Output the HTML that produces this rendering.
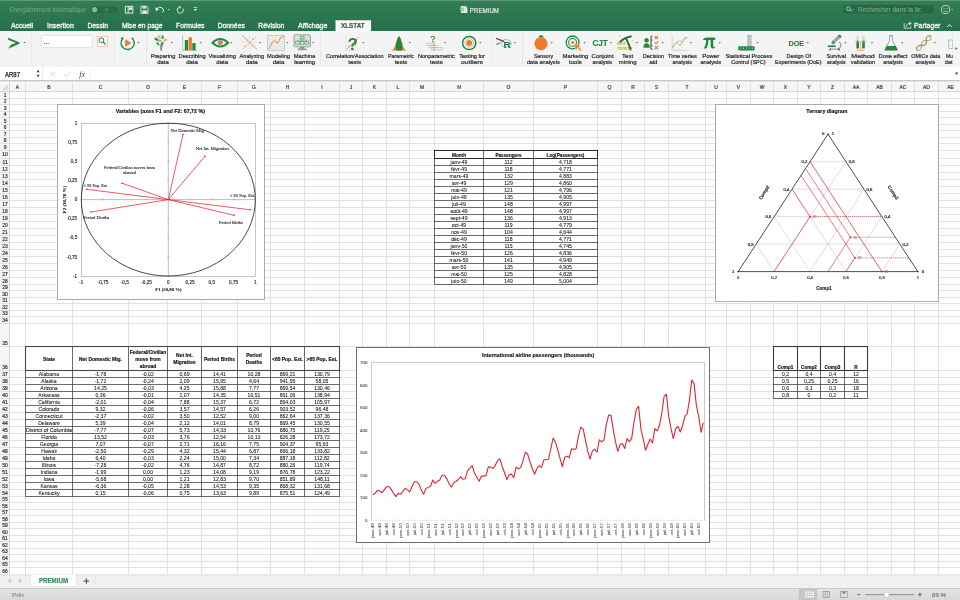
<!DOCTYPE html>
<html><head><meta charset="utf-8"><style>
*{box-sizing:border-box}
html,body{margin:0;padding:0}
body{width:960px;height:600px;overflow:hidden;position:relative;background:#fff;font-family:"Liberation Sans", sans-serif;}
.a{position:absolute}
.t{position:absolute;white-space:nowrap;line-height:1}
</style></head><body>
<svg class="a" style="left:0;top:0;will-change:transform" width="960" height="600" viewBox="0 0 960 600"><defs><linearGradient id="tg" x1="0" y1="0" x2="0" y2="1"><stop offset="0" stop-color="#327e55"/><stop offset="1" stop-color="#25704a"/></linearGradient></defs><rect x="0" y="0" width="960" height="31.1" fill="url(#tg)"/><rect x="0" y="0" width="960" height="1" fill="#5e9a78"/><text x="9.5" y="11.98" font-size="6.6" font-family='"Liberation Sans", sans-serif' fill="#6d9f82" stroke="#6d9f82" stroke-width="0.14" textLength="76" lengthAdjust="spacingAndGlyphs">Enregistrement automatique</text><rect x="91" y="5.9" width="27" height="7.5" rx="3.75" fill="#296c48"/><circle cx="94.6" cy="9.6" r="2.6" fill="#8fb49d"/><circle cx="106.5" cy="9.6" r="1.1" fill="none" stroke="#7fa68e" stroke-width="0.6"/><rect x="125.3" y="6.3" width="7.6" height="6.8" fill="none" stroke="#e8f0eb" stroke-width="0.9"/><line x1="128.2" y1="6.3" x2="128.2" y2="13.1" stroke="#e8f0eb" stroke-width="0.9"/><rect x="129" y="7.4" width="3" height="2.5" fill="#e8f0eb"/><path d="M140.9 6.2h5.8l1.3 1.3v5.8h-7.1z" fill="none" stroke="#e8f0eb" stroke-width="0.9"/><rect x="142.6" y="6.4" width="3.6" height="2.2" fill="#e8f0eb"/><rect x="142.4" y="10.4" width="4.4" height="2.6" fill="#e8f0eb"/><path d="M162.8 12.4 A3.4 3.2 0 0 0 157.2 8.6" fill="none" stroke="#e8f0eb" stroke-width="1"/><path d="M155.4 7 l0.4 4 l3.2 -1.6z" fill="#e8f0eb"/><path d="M167.7 9 h2.2 l-1.1 1.3z" fill="#e8f0eb"/><path d="M179.7 7.3 A3 3 0 1 0 182.8 8.6" fill="none" stroke="#e8f0eb" stroke-width="0.9"/><path d="M178.6 6.3 l2.6 0.4 l-1.6 2z" fill="#e8f0eb"/><rect x="193.6" y="7" width="3.6" height="0.7" fill="#e8f0eb"/><path d="M193.6 9 h3.6 l-1.8 2z" fill="#e8f0eb"/><path d="M460.9 5.9 h4.6 l1.9 1.9 v5.1 h-6.5z" fill="#dfeae3"/><rect x="460.2" y="7.6" width="3.6" height="3.8" fill="#9bbfa9"/><text x="469.8" y="12.52" font-size="7" font-family='"Liberation Sans", sans-serif' fill="#dfeae3" stroke="#dfeae3" stroke-width="0.2" textLength="29.2" lengthAdjust="spacingAndGlyphs">PREMIUM</text><rect x="843.5" y="5.1" width="89.8" height="8.4" rx="1" fill="#246744"/><circle cx="848.4" cy="8.6" r="1.9" fill="none" stroke="#d7e5dc" stroke-width="0.8"/><line x1="849.8" y1="10" x2="851.3" y2="11.6" stroke="#d7e5dc" stroke-width="0.9"/><rect x="852.3" y="9" width="1.6" height="0.6" fill="#d7e5dc"/><text x="857.8" y="11.98" font-size="6.6" font-family='"Liberation Sans", sans-serif' fill="#7fa78f" stroke="#7fa78f" stroke-width="0.14" textLength="64.2" lengthAdjust="spacingAndGlyphs">Rechercher dans la fe:</text><circle cx="945.6" cy="9.5" r="4.1" fill="none" stroke="#dfeae3" stroke-width="0.8"/><circle cx="944.1" cy="8.6" r="0.5" fill="#dfeae3"/><circle cx="947.1" cy="8.6" r="0.5" fill="#dfeae3"/><path d="M943.6 10.7 Q945.6 12.4 947.6 10.7" fill="none" stroke="#dfeae3" stroke-width="0.7"/><path d="M951.2 9.2h1.8l-0.9 1.1z" fill="#dfeae3"/><text x="11" y="28.02" font-size="7" font-family='"Liberation Sans", sans-serif' fill="#f4f8f5" stroke="#f4f8f5" stroke-width="0.3" textLength="22" lengthAdjust="spacingAndGlyphs">Accueil</text><text x="47" y="28.02" font-size="7" font-family='"Liberation Sans", sans-serif' fill="#f4f8f5" stroke="#f4f8f5" stroke-width="0.3">Insertion</text><text x="87.5" y="28.02" font-size="7" font-family='"Liberation Sans", sans-serif' fill="#f4f8f5" stroke="#f4f8f5" stroke-width="0.3" textLength="20.5" lengthAdjust="spacingAndGlyphs">Dessin</text><text x="122" y="28.02" font-size="7" font-family='"Liberation Sans", sans-serif' fill="#f4f8f5" stroke="#f4f8f5" stroke-width="0.3" textLength="40.5" lengthAdjust="spacingAndGlyphs">Mise en page</text><text x="176" y="28.02" font-size="7" font-family='"Liberation Sans", sans-serif' fill="#f4f8f5" stroke="#f4f8f5" stroke-width="0.3" textLength="28.5" lengthAdjust="spacingAndGlyphs">Formules</text><text x="217.7" y="28.02" font-size="7" font-family='"Liberation Sans", sans-serif' fill="#f4f8f5" stroke="#f4f8f5" stroke-width="0.3" textLength="27.1" lengthAdjust="spacingAndGlyphs">Données</text><text x="258.3" y="28.02" font-size="7" font-family='"Liberation Sans", sans-serif' fill="#f4f8f5" stroke="#f4f8f5" stroke-width="0.3" textLength="26.1" lengthAdjust="spacingAndGlyphs">Révision</text><text x="298" y="28.02" font-size="7" font-family='"Liberation Sans", sans-serif' fill="#f4f8f5" stroke="#f4f8f5" stroke-width="0.3" textLength="29.5" lengthAdjust="spacingAndGlyphs">Affichage</text><path d="M335.5 31.4 V20.2 H371.1 V31.4z" fill="#f8f8f8"/><text x="341" y="27.85" font-size="6.8" font-family='"Liberation Sans", sans-serif' fill="#3a5c49" stroke="#3a5c49" stroke-width="0.2" font-weight="bold" textLength="23.6" lengthAdjust="spacingAndGlyphs">XLSTAT</text><path d="M904.2 23 v5.2 h6.6 v-2.2" fill="none" stroke="#dfeae3" stroke-width="0.8"/><path d="M905.8 27 Q906.5 23.3 909.8 23.3" fill="none" stroke="#dfeae3" stroke-width="0.8"/><path d="M909.2 21.6 l2.6 1.8 l-2.6 1.8z" fill="#dfeae3"/><text x="914" y="28.12" font-size="7" font-family='"Liberation Sans", sans-serif' fill="#eef4f0" stroke="#eef4f0" stroke-width="0.3" textLength="26.4" lengthAdjust="spacingAndGlyphs">Partager</text><path d="M947.2 27 L949.4 24.6 L951.6 27" fill="none" stroke="#eef4f0" stroke-width="1"/><rect x="0" y="31.1" width="960" height="35.3" fill="#f4f4f4"/><rect x="0" y="31.1" width="960" height="1.1" fill="#fbfbfb"/><line x1="31.3" y1="33" x2="31.3" y2="64.5" stroke="#dedede" stroke-width="0.6"/><line x1="114" y1="33" x2="114" y2="64.5" stroke="#dedede" stroke-width="0.6"/><line x1="146.6" y1="33" x2="146.6" y2="64.5" stroke="#dedede" stroke-width="0.6"/><line x1="320.6" y1="33" x2="320.6" y2="64.5" stroke="#dedede" stroke-width="0.6"/><line x1="491.6" y1="33" x2="491.6" y2="64.5" stroke="#dedede" stroke-width="0.6"/><line x1="522.8" y1="33" x2="522.8" y2="64.5" stroke="#dedede" stroke-width="0.6"/><line x1="952.8" y1="31.3" x2="952.8" y2="66.4" stroke="#dcdcdc" stroke-width="0.6"/><line x1="0" y1="66.2" x2="960" y2="66.2" stroke="#d9d9d9" stroke-width="0.6"/><path d="M7.6 37.6 L19.6 42.4 L19.8 43.6 L8.4 48.8 L11.2 44.6 L16 43.1 L8.5 40z" fill="#1e8a3a"/><path d="M23.4 42 h2.2 l-1.1 1.3z" fill="#444"/><rect x="41.4" y="35.4" width="51" height="12" rx="1.2" fill="#fff" stroke="#cfcfcf" stroke-width="0.6"/><circle cx="44.6" cy="43.6" r="0.5" fill="#333"/><circle cx="46.4" cy="43.6" r="0.5" fill="#333"/><circle cx="48.2" cy="43.6" r="0.5" fill="#333"/><rect x="97.2" y="36.4" width="10.2" height="9.9" fill="#fbfbfb" stroke="#f0a07a" stroke-width="0.5"/><circle cx="101.4" cy="40.3" r="2.4" fill="none" stroke="#1e8a3a" stroke-width="1"/><line x1="103.1" y1="42" x2="105.6" y2="44.6" stroke="#1e8a3a" stroke-width="1.2"/><path d="M131.8 37.8 A6.6 6.6 0 1 1 122.2 39.2" fill="none" stroke="#1e8a3a" stroke-width="1.4"/><path d="M120.6 37.4 l3.4 0.2 l-1.8 2.8z" fill="#1e8a3a"/><path d="M125.2 39.2 L131.6 43 L125.2 46.8z" fill="#ee7b2c"/><path d="M137.4 42 h2.2 l-1.1 1.3z" fill="#444"/><g><rect x="157.4" y="35.6" width="3.2" height="2" fill="#f0a27a" transform="rotate(-30 159 36.6)"/><rect x="161.6" y="35.4" width="2" height="3.6" fill="#3c9a52"/><rect x="154.6" y="38.2" width="3.6" height="2.2" fill="#2f8a45" transform="rotate(35 156.4 39.3)"/><rect x="163.6" y="39" width="3.4" height="2.2" fill="#f0a27a" transform="rotate(-35 165.3 40.1)"/><rect x="158.2" y="39.6" width="3" height="2" fill="#6cc07e" transform="rotate(20 159.7 40.6)"/><rect x="156.8" y="42.2" width="2" height="3" fill="#3c9a52" transform="rotate(-25 157.8 43.7)"/><rect x="161" y="42" width="2.2" height="3.4" fill="#2f8a45" transform="rotate(25 162.1 43.7)"/><rect x="159.4" y="37.6" width="1.6" height="1.6" fill="#f4b58e"/><rect x="160.2" y="45.6" width="2" height="5" fill="#8c8c8c"/><path d="M158.8 44.6 h4.8 l-1.4 1.6 h-2z" fill="#7f9f86"/></g><path d="M170.6 42.2 h2.2 l-1.1 1.3z" fill="#444"/><text x="150.7" y="57.86" font-size="6" font-family='"Liberation Sans", sans-serif' fill="#2b2b2b" stroke="#2b2b2b" stroke-width="0.22" textLength="24.6" lengthAdjust="spacingAndGlyphs">Preparing</text><text x="163" y="63.86" font-size="6" font-family='"Liberation Sans", sans-serif' fill="#2b2b2b" stroke="#2b2b2b" stroke-width="0.22" text-anchor="middle">data</text><path d="M182.6 35 V50.4 H197" fill="none" stroke="#8f8f8f" stroke-width="0.5"/><rect x="184.8" y="40" width="3.3" height="10.3" fill="#1e8a3a"/><rect x="188.6" y="37.2" width="3.3" height="13.1" fill="#ee7b2c"/><rect x="192.3" y="43" width="3.3" height="7.3" fill="#1e8a3a"/><path d="M199.7 42.2 h2.2 l-1.1 1.3z" fill="#444"/><text x="178.5" y="57.86" font-size="6" font-family='"Liberation Sans", sans-serif' fill="#2b2b2b" stroke="#2b2b2b" stroke-width="0.22" textLength="27.2" lengthAdjust="spacingAndGlyphs">Describing</text><text x="192" y="63.86" font-size="6" font-family='"Liberation Sans", sans-serif' fill="#2b2b2b" stroke="#2b2b2b" stroke-width="0.22" text-anchor="middle">data</text><path d="M212.4 42.8 Q220.3 35.2 228.2 42.8 Q220.3 50.4 212.4 42.8z" fill="#fff" stroke="#1e8a3a" stroke-width="1.9"/><circle cx="220.3" cy="42.8" r="2.8" fill="#a8a8a8"/><circle cx="220.3" cy="42.8" r="1.9" fill="#ee7b2c"/><path d="M230.1 42.2 h2.2 l-1.1 1.3z" fill="#444"/><text x="208.5" y="57.86" font-size="6" font-family='"Liberation Sans", sans-serif' fill="#2b2b2b" stroke="#2b2b2b" stroke-width="0.22" textLength="27.5" lengthAdjust="spacingAndGlyphs">Visualizing</text><text x="222.2" y="63.86" font-size="6" font-family='"Liberation Sans", sans-serif' fill="#2b2b2b" stroke="#2b2b2b" stroke-width="0.22" text-anchor="middle">data</text><g stroke-width="0.6"><line x1="249.6" y1="34.8" x2="249.6" y2="49.8" stroke="#b9c9bd" stroke-dasharray="1 0.8"/><line x1="242" y1="42.4" x2="257.5" y2="42.4" stroke="#d9b9a9" stroke-dasharray="1 0.8"/><line x1="242.5" y1="35.5" x2="257" y2="49.5" stroke="#ee7b2c" stroke-width="1" opacity="0.8"/><line x1="243" y1="49" x2="256.5" y2="36" stroke="#e8a47a" stroke-width="0.8" opacity="0.8"/><circle cx="245" cy="46" r="0.5" fill="#1e8a3a"/><circle cx="253" cy="39" r="0.5" fill="#1e8a3a"/><circle cx="247" cy="40" r="0.5" fill="#7cc08a"/><circle cx="252" cy="46.5" r="0.5" fill="#7cc08a"/></g><path d="M259 42.2 h2.2 l-1.1 1.3z" fill="#444"/><text x="239.4" y="57.86" font-size="6" font-family='"Liberation Sans", sans-serif' fill="#2b2b2b" stroke="#2b2b2b" stroke-width="0.22" textLength="24.8" lengthAdjust="spacingAndGlyphs">Analyzing</text><text x="251.8" y="63.86" font-size="6" font-family='"Liberation Sans", sans-serif' fill="#2b2b2b" stroke="#2b2b2b" stroke-width="0.22" text-anchor="middle">data</text><g stroke="#c9d9cc" stroke-width="0.35"><line x1="267.8" y1="35.3" x2="267.8" y2="50.3"/><line x1="270.2" y1="35.3" x2="270.2" y2="50.3"/><line x1="272.6" y1="35.3" x2="272.6" y2="50.3"/><line x1="275" y1="35.3" x2="275" y2="50.3"/><line x1="277.4" y1="35.3" x2="277.4" y2="50.3"/><line x1="279.8" y1="35.3" x2="279.8" y2="50.3"/><line x1="282.2" y1="35.3" x2="282.2" y2="50.3"/><line x1="284.6" y1="35.3" x2="284.6" y2="50.3"/><line x1="267.8" y1="35.3" x2="284.7" y2="35.3"/><line x1="267.8" y1="37.44" x2="284.7" y2="37.44"/><line x1="267.8" y1="39.58" x2="284.7" y2="39.58"/><line x1="267.8" y1="41.72" x2="284.7" y2="41.72"/><line x1="267.8" y1="43.86" x2="284.7" y2="43.86"/><line x1="267.8" y1="46" x2="284.7" y2="46"/><line x1="267.8" y1="48.14" x2="284.7" y2="48.14"/><line x1="267.8" y1="50.28" x2="284.7" y2="50.28"/></g><rect x="267.8" y="35.3" width="16.9" height="15" fill="none" stroke="#9fb7a4" stroke-width="0.5"/><path d="M269 49 L272.5 42 L275 40.5 L277.2 43.5 L280.5 38 L283.5 36.6" fill="none" stroke="#ee7b2c" stroke-width="0.9"/><path d="M286.2 42.2 h2.2 l-1.1 1.3z" fill="#444"/><text x="267" y="57.86" font-size="6" font-family='"Liberation Sans", sans-serif' fill="#2b2b2b" stroke="#2b2b2b" stroke-width="0.22" textLength="23" lengthAdjust="spacingAndGlyphs">Modeling</text><text x="278.5" y="63.86" font-size="6" font-family='"Liberation Sans", sans-serif' fill="#2b2b2b" stroke="#2b2b2b" stroke-width="0.22" text-anchor="middle">data</text><rect x="294" y="34.8" width="16.4" height="12" rx="0.8" fill="#dedede" stroke="#8a8a8a" stroke-width="0.8"/><rect x="300" y="47" width="4.4" height="1.8" fill="#8a8a8a"/><rect x="297.6" y="48.6" width="9.2" height="1.6" rx="0.5" fill="#9a9a9a"/><g fill="#cfe8d2" stroke="#1e8a3a" stroke-width="0.5"><rect x="300.4" y="36.6" width="3.6" height="2.3"/><rect x="295.8" y="41.6" width="3.6" height="2.6"/><rect x="300.4" y="41.6" width="3.6" height="2.6"/><rect x="305" y="41.6" width="3.6" height="2.6"/></g><path d="M302.2 38.9 V41.6 M297.6 41.6 V40.2 H306.8 V41.6" fill="none" stroke="#1e8a3a" stroke-width="0.4"/><path d="M312.2 42.2 h2.2 l-1.1 1.3z" fill="#444"/><text x="293.8" y="57.86" font-size="6" font-family='"Liberation Sans", sans-serif' fill="#2b2b2b" stroke="#2b2b2b" stroke-width="0.22" textLength="21.6" lengthAdjust="spacingAndGlyphs">Machine</text><text x="294.2" y="63.86" font-size="6" font-family='"Liberation Sans", sans-serif' fill="#2b2b2b" stroke="#2b2b2b" stroke-width="0.22" textLength="20.8" lengthAdjust="spacingAndGlyphs">learning</text><path d="M345.8 36 V50.4 H359.2" fill="none" stroke="#c8c8c8" stroke-width="0.5"/><line x1="346.5" y1="49.5" x2="358.5" y2="37.5" stroke="#ee7b2c" stroke-width="0.8"/><text x="347.6" y="49.6" font-size="17" font-family='"Liberation Sans", sans-serif' fill="#1e8a3a" font-weight="bold">?</text><circle cx="349" cy="46" r="0.5" fill="#1e8a3a"/><circle cx="355.5" cy="45" r="0.5" fill="#1e8a3a"/><circle cx="356.5" cy="40" r="0.5" fill="#7cc08a"/><path d="M362.3 42.2 h2.2 l-1.1 1.3z" fill="#444"/><text x="326" y="57.86" font-size="6" font-family='"Liberation Sans", sans-serif' fill="#2b2b2b" stroke="#2b2b2b" stroke-width="0.22" textLength="57.5" lengthAdjust="spacingAndGlyphs">Correlation/Association</text><text x="354.7" y="63.86" font-size="6" font-family='"Liberation Sans", sans-serif' fill="#2b2b2b" stroke="#2b2b2b" stroke-width="0.22" text-anchor="middle">tests</text><path d="M392 50.4 L392.00 50.03 L392.35 49.87 L392.70 49.66 L393.05 49.38 L393.40 49.02 L393.75 48.58 L394.10 48.03 L394.45 47.37 L394.80 46.60 L395.15 45.72 L395.50 44.74 L395.85 43.68 L396.20 42.56 L396.55 41.42 L396.90 40.30 L397.25 39.24 L397.60 38.29 L397.95 37.50 L398.30 36.90 L398.65 36.53 L399.00 36.40 L399.35 36.53 L399.70 36.90 L400.05 37.50 L400.40 38.29 L400.75 39.24 L401.10 40.30 L401.45 41.42 L401.80 42.56 L402.15 43.68 L402.50 44.74 L402.85 45.72 L403.20 46.60 L403.55 47.37 L403.90 48.03 L404.25 48.58 L404.60 49.02 L404.95 49.38 L405.30 49.66 L405.65 49.87 L406.00 50.03 L406 50.4z" fill="#ee7b2c"/><path d="M395.85 50.4 L395.85 43.68 L396.20 42.56 L396.55 41.42 L396.90 40.30 L397.25 39.24 L397.60 38.29 L397.95 37.50 L398.30 36.90 L398.65 36.53 L399.00 36.40 L399.35 36.53 L399.70 36.90 L400.05 37.50 L400.40 38.29 L400.75 39.24 L401.10 40.30 L401.45 41.42 L401.80 42.56 L402.15 43.68 L402.15 50.4z" fill="#1e8a3a"/><path d="M408.6 42.2 h2.2 l-1.1 1.3z" fill="#444"/><text x="387.9" y="57.86" font-size="6" font-family='"Liberation Sans", sans-serif' fill="#2b2b2b" stroke="#2b2b2b" stroke-width="0.22" textLength="26.2" lengthAdjust="spacingAndGlyphs">Parametric</text><text x="401" y="63.86" font-size="6" font-family='"Liberation Sans", sans-serif' fill="#2b2b2b" stroke="#2b2b2b" stroke-width="0.22" text-anchor="middle">tests</text><text x="430.4" y="41.6" font-size="8.4" font-family='"Liberation Sans", sans-serif' fill="#1e8a3a" stroke="#1e8a3a" stroke-width="0.25">?</text><g fill="none" stroke="#a9a9a9" stroke-width="0.5"><path d="M426.6 43.2 h8 v2.2 h-8z M429 45.4 h8.6 v2.2 h-8.6z M431.6 47.6 h10.6 v2.2 h-10.6z"/></g><line x1="434" y1="42" x2="434" y2="51" stroke="#ee7b2c" stroke-width="0.6"/><path d="M444.1 42.2 h2.2 l-1.1 1.3z" fill="#444"/><text x="417.9" y="57.86" font-size="6" font-family='"Liberation Sans", sans-serif' fill="#2b2b2b" stroke="#2b2b2b" stroke-width="0.22" textLength="36.9" lengthAdjust="spacingAndGlyphs">Nonparametric</text><text x="436.4" y="63.86" font-size="6" font-family='"Liberation Sans", sans-serif' fill="#2b2b2b" stroke="#2b2b2b" stroke-width="0.22" text-anchor="middle">tests</text><circle cx="469.2" cy="43" r="6.6" fill="#fff" stroke="#1e8a3a" stroke-width="1.5"/><circle cx="469.2" cy="43" r="4.2" fill="none" stroke="#9a9a9a" stroke-width="0.7"/><circle cx="469.2" cy="43" r="2.9" fill="#ee7b2c"/><path d="M479.2 42.2 h2.2 l-1.1 1.3z" fill="#444"/><text x="459.2" y="57.86" font-size="6" font-family='"Liberation Sans", sans-serif' fill="#2b2b2b" stroke="#2b2b2b" stroke-width="0.22" textLength="25.7" lengthAdjust="spacingAndGlyphs">Testing for</text><text x="461" y="63.86" font-size="6" font-family='"Liberation Sans", sans-serif' fill="#2b2b2b" stroke="#2b2b2b" stroke-width="0.22" textLength="22" lengthAdjust="spacingAndGlyphs">outliers</text><ellipse cx="506.2" cy="43.4" rx="5" ry="3.9" fill="none" stroke="#a8a8a8" stroke-width="0.9"/><line x1="496.8" y1="38.6" x2="503.6" y2="41.4" stroke="#505050" stroke-width="1.5" stroke-linecap="round"/><line x1="496.8" y1="44.6" x2="499.6" y2="43" stroke="#707070" stroke-width="1.1" stroke-linecap="round"/><text x="503.4" y="47.9" font-size="9.6" font-family='"Liberation Sans", sans-serif' fill="#1b7a3e" font-weight="bold" textLength="7.4" lengthAdjust="spacingAndGlyphs">R</text><path d="M513.9 42.2 h2.2 l-1.1 1.3z" fill="#444"/><circle cx="541" cy="43.6" r="6.6" fill="#ee7b2c"/><path d="M538.4 36.2 Q541 34.2 543.8 36.4 Q541 37.8 538.4 36.2z" fill="#1e8a3a"/><line x1="541" y1="36.8" x2="541" y2="38" stroke="#3f6f3f" stroke-width="0.5"/><path d="M550.6 42.2 h2.2 l-1.1 1.3z" fill="#444"/><text x="534" y="57.86" font-size="6" font-family='"Liberation Sans", sans-serif' fill="#2b2b2b" stroke="#2b2b2b" stroke-width="0.22" textLength="19" lengthAdjust="spacingAndGlyphs">Sensory</text><text x="527" y="63.86" font-size="6" font-family='"Liberation Sans", sans-serif' fill="#2b2b2b" stroke="#2b2b2b" stroke-width="0.22" textLength="32.7" lengthAdjust="spacingAndGlyphs">data analysis</text><circle cx="572.6" cy="42.4" r="6.4" fill="none" stroke="#1e8a3a" stroke-width="1.3"/><circle cx="572.6" cy="42.4" r="3.9" fill="none" stroke="#1e8a3a" stroke-width="1.1"/><circle cx="572.6" cy="42.4" r="1.5" fill="#ee7b2c"/><path d="M574 43.6 L581.2 46 L578.6 46.9 L581.6 50 L580.3 51 L577.4 47.8 L576 50.4z" fill="#ee7b2c" stroke="#fff" stroke-width="0.3"/><path d="M583.4 42.2 h2.2 l-1.1 1.3z" fill="#444"/><text x="562.5" y="57.86" font-size="6" font-family='"Liberation Sans", sans-serif' fill="#2b2b2b" stroke="#2b2b2b" stroke-width="0.22" textLength="25.9" lengthAdjust="spacingAndGlyphs">Marketing</text><text x="575.4" y="63.86" font-size="6" font-family='"Liberation Sans", sans-serif' fill="#2b2b2b" stroke="#2b2b2b" stroke-width="0.22" text-anchor="middle">tools</text><text x="592.4" y="46.25" font-size="8.2" font-family='"Liberation Sans", sans-serif' fill="#1e8a3a" stroke="#1e8a3a" stroke-width="0.14" font-weight="bold">CJT</text><path d="M609.7 42.2 h2.2 l-1.1 1.3z" fill="#444"/><text x="591.6" y="57.86" font-size="6" font-family='"Liberation Sans", sans-serif' fill="#2b2b2b" stroke="#2b2b2b" stroke-width="0.22">Conjoint</text><text x="592.4" y="63.86" font-size="6" font-family='"Liberation Sans", sans-serif' fill="#2b2b2b" stroke="#2b2b2b" stroke-width="0.22" textLength="19.7" lengthAdjust="spacingAndGlyphs">analysis</text><text x="617.2" y="45.4" font-size="5" font-family='"Liberation Sans", sans-serif' fill="#d9a548" stroke="#d9a548" stroke-width="0.15">text</text><text x="617.2" y="50" font-size="5" font-family='"Liberation Sans", sans-serif' fill="#d9a548" stroke="#d9a548" stroke-width="0.15" textLength="14.6" lengthAdjust="spacingAndGlyphs">mining</text><path d="M619.8 42.2 Q624 37.6 631.6 36.2" fill="none" stroke="#1f6f35" stroke-width="1.9"/><line x1="626" y1="37.8" x2="630.8" y2="49.6" stroke="#1f6f35" stroke-width="1.9"/><circle cx="620.2" cy="35.8" r="1.1" fill="#f3d27a"/><circle cx="632.4" cy="40.4" r="1" fill="#f3d27a"/><path d="M635.8 42.2 h2.2 l-1.1 1.3z" fill="#444"/><text x="627.6" y="57.86" font-size="6" font-family='"Liberation Sans", sans-serif' fill="#2b2b2b" stroke="#2b2b2b" stroke-width="0.22" text-anchor="middle">Text</text><text x="618.8" y="63.86" font-size="6" font-family='"Liberation Sans", sans-serif' fill="#2b2b2b" stroke="#2b2b2b" stroke-width="0.22">mining</text><circle cx="646.6" cy="40.2" r="2.2" fill="#1e8a3a"/><path d="M643.4 47.8 Q643.4 43.2 646.6 43.2 Q649.8 43.2 649.8 47.8z" fill="#1e8a3a"/><path d="M652.4 36.2 h-1.4 v13 h1.4 M651 40 h1.2 M651 45.6 h1.2" fill="none" stroke="#2b2b2b" stroke-width="0.9"/><path d="M654.8 35.8 l3.2 3.2 M658 35.8 l-3.2 3.2 M654.8 46.2 l3.2 3.2 M658 46.2 l-3.2 3.2" stroke="#ee7b2c" stroke-width="1.1"/><path d="M654.6 42.4 l1.3 1.4 l2.6 -2.6" fill="none" stroke="#1e8a3a" stroke-width="1"/><path d="M661.6 42.2 h2.2 l-1.1 1.3z" fill="#444"/><text x="642.8" y="57.86" font-size="6" font-family='"Liberation Sans", sans-serif' fill="#2b2b2b" stroke="#2b2b2b" stroke-width="0.22" textLength="21.2" lengthAdjust="spacingAndGlyphs">Decision</text><text x="653.4" y="63.86" font-size="6" font-family='"Liberation Sans", sans-serif' fill="#2b2b2b" stroke="#2b2b2b" stroke-width="0.22" text-anchor="middle">aid</text><path d="M672.2 35.4 V50.4 H687.7" fill="none" stroke="#b8b8b8" stroke-width="0.5"/><path d="M672.6 48 Q676 40 678.6 44 Q681 47 683.4 40 Q685 36 687.6 38" fill="none" stroke="#72b772" stroke-width="0.8"/><path d="M672.6 47 Q675 43 677.5 41.5 Q680 40 682 42 Q684.5 38 687.2 37" fill="none" stroke="#f0a070" stroke-width="0.8"/><path d="M689.7 42.2 h2.2 l-1.1 1.3z" fill="#444"/><text x="668" y="57.86" font-size="6" font-family='"Liberation Sans", sans-serif' fill="#2b2b2b" stroke="#2b2b2b" stroke-width="0.22" textLength="28.7" lengthAdjust="spacingAndGlyphs">Time series</text><text x="672.5" y="63.86" font-size="6" font-family='"Liberation Sans", sans-serif' fill="#2b2b2b" stroke="#2b2b2b" stroke-width="0.22" textLength="19.5" lengthAdjust="spacingAndGlyphs">analysis</text><path d="M702.8 40.2 Q703.6 37.6 706.4 37.6 H715.2 V40 H702.8z" fill="#1e8a3a"/><path d="M706 39 Q706.4 45 703.6 48.4 L706.2 48.4 Q708.6 45 708.4 39z" fill="#1e8a3a"/><path d="M710.6 39 V46.6 Q710.8 48.6 712.8 48.6 Q714.6 48.6 715 47 L714.2 46.6 Q713.6 47.2 713.2 46.4 V39z" fill="#1e8a3a"/><path d="M718.6 42.2 h2.2 l-1.1 1.3z" fill="#444"/><text x="710.7" y="57.86" font-size="6" font-family='"Liberation Sans", sans-serif' fill="#2b2b2b" stroke="#2b2b2b" stroke-width="0.22" text-anchor="middle">Power</text><text x="700.4" y="63.86" font-size="6" font-family='"Liberation Sans", sans-serif' fill="#2b2b2b" stroke="#2b2b2b" stroke-width="0.22" textLength="20.6" lengthAdjust="spacingAndGlyphs">analysis</text><rect x="747.6" y="35.2" width="3.6" height="13" fill="#b9b9b9" stroke="#999" stroke-width="0.3"/><g stroke="#eee" stroke-width="0.5"><line x1="747.6" y1="38" x2="751.2" y2="38"/><line x1="747.6" y1="41" x2="751.2" y2="41"/><line x1="747.6" y1="44" x2="751.2" y2="44"/></g><rect x="738.2" y="46.2" width="16.4" height="4.2" rx="0.8" fill="#1e8a3a"/><g fill="#cfe8d2"><rect x="740" y="47.6" width="1" height="1"/><rect x="743" y="47.6" width="1" height="1"/><rect x="746" y="47.6" width="1" height="1"/><rect x="749" y="47.6" width="1" height="1"/><rect x="752" y="47.6" width="1" height="1"/></g><path d="M756.4 42.2 h2.2 l-1.1 1.3z" fill="#444"/><text x="725.4" y="57.86" font-size="6" font-family='"Liberation Sans", sans-serif' fill="#2b2b2b" stroke="#2b2b2b" stroke-width="0.22" textLength="46.9" lengthAdjust="spacingAndGlyphs">Statistical Process</text><text x="731.2" y="63.86" font-size="6" font-family='"Liberation Sans", sans-serif' fill="#2b2b2b" stroke="#2b2b2b" stroke-width="0.22" textLength="34.4" lengthAdjust="spacingAndGlyphs">Control (SPC)</text><text x="788.4" y="46.01" font-size="7.8" font-family='"Liberation Sans", sans-serif' fill="#1e8a3a" stroke="#1e8a3a" stroke-width="0.14" font-weight="bold" textLength="15.8" lengthAdjust="spacingAndGlyphs">DOE</text><path d="M806.7 42.2 h2.2 l-1.1 1.3z" fill="#444"/><text x="786.6" y="57.86" font-size="6" font-family='"Liberation Sans", sans-serif' fill="#2b2b2b" stroke="#2b2b2b" stroke-width="0.22" textLength="24.4" lengthAdjust="spacingAndGlyphs">Design Of</text><text x="775" y="63.86" font-size="6" font-family='"Liberation Sans", sans-serif' fill="#2b2b2b" stroke="#2b2b2b" stroke-width="0.22" textLength="46.6" lengthAdjust="spacingAndGlyphs">Experiments (DoE)</text><path d="M839.4 41.6 Q842.6 46.4 838.6 48.6 Q835.6 50 831.6 48.6" fill="none" stroke="#a49fa8" stroke-width="1.3"/><line x1="833" y1="42.6" x2="839.8" y2="36.2" stroke="#a49fa8" stroke-width="3.4" stroke-linecap="round"/><path d="M838.6 35.2 l2.4 2.2 M832.2 41.8 l2.2 2" stroke="#1e8a3a" stroke-width="1.4"/><rect x="827.8" y="45.4" width="8" height="1.7" fill="#1e8a3a"/><path d="M829.6 50.2 l1.4 -1.6 M839.6 50.2 l-1.4 -1.6" stroke="#1e8a3a" stroke-width="1.6"/><path d="M844.2 42.2 h2.2 l-1.1 1.3z" fill="#444"/><text x="826.5" y="57.86" font-size="6" font-family='"Liberation Sans", sans-serif' fill="#2b2b2b" stroke="#2b2b2b" stroke-width="0.22" textLength="19.5" lengthAdjust="spacingAndGlyphs">Survival</text><text x="827" y="63.86" font-size="6" font-family='"Liberation Sans", sans-serif' fill="#2b2b2b" stroke="#2b2b2b" stroke-width="0.22" textLength="18.5" lengthAdjust="spacingAndGlyphs">analysis</text><rect x="856.4" y="35.4" width="2.6" height="13" rx="1.3" fill="#cfe1d3"/><rect x="862.2" y="35.4" width="2.6" height="13" rx="1.3" fill="#cfe1d3"/><rect x="856.4" y="40.4" width="2.6" height="8.2" rx="1.2" fill="#1e8a3a"/><rect x="862.2" y="40.4" width="2.6" height="8.2" rx="1.2" fill="#1e8a3a"/><path d="M855.2 41.8 h10.8 M860.6 41.8 v8.4 M857 50.4 h7.4" stroke="#f0a27a" stroke-width="0.9"/><path d="M870.9 42.2 h2.2 l-1.1 1.3z" fill="#444"/><text x="851.3" y="57.86" font-size="6" font-family='"Liberation Sans", sans-serif' fill="#2b2b2b" stroke="#2b2b2b" stroke-width="0.22" textLength="23.4" lengthAdjust="spacingAndGlyphs">Method</text><text x="850.8" y="63.86" font-size="6" font-family='"Liberation Sans", sans-serif' fill="#2b2b2b" stroke="#2b2b2b" stroke-width="0.22" textLength="24.4" lengthAdjust="spacingAndGlyphs">validation</text><path d="M889.6 35.8 h2.8 v4.6 l5 9.8 h-12.8 l5 -9.8z" fill="#f6f6f6" stroke="#6c6c6c" stroke-width="0.6"/><path d="M886.6 46 l-1.6 4.2 h12.8 l-1.9-4.2z" fill="#1e8a3a"/><rect x="889.4" y="35.2" width="3.2" height="0.8" fill="#ee7b2c"/><path d="M900.9 42.2 h2.2 l-1.1 1.3z" fill="#444"/><text x="878.5" y="57.86" font-size="6" font-family='"Liberation Sans", sans-serif' fill="#2b2b2b" stroke="#2b2b2b" stroke-width="0.22" textLength="29.1" lengthAdjust="spacingAndGlyphs">Dose effect</text><text x="883.3" y="63.86" font-size="6" font-family='"Liberation Sans", sans-serif' fill="#2b2b2b" stroke="#2b2b2b" stroke-width="0.22" textLength="19.7" lengthAdjust="spacingAndGlyphs">analysis</text><polyline points="916.60,50.20 917.32,50.20 918.03,50.19 918.69,50.13 919.30,50.02 919.84,49.84 920.30,49.58 920.67,49.23 920.96,48.80 921.17,48.29 921.30,47.70 921.37,47.05 921.40,46.36 921.40,45.64 921.40,44.92 921.40,44.20 921.45,43.53 921.54,42.90 921.69,42.33 921.93,41.85 922.24,41.44 922.65,41.13 923.13,40.89 923.70,40.74 924.33,40.65 925.00,40.60 925.72,40.60 926.44,40.60 927.16,40.60 927.85,40.57 928.50,40.50 929.09,40.37 929.60,40.16 930.03,39.87 930.38,39.50 930.64,39.04 930.82,38.50 930.93,37.89 930.99,37.23 931.00,36.52 931.00,35.80" fill="none" stroke="#ee7b2c" stroke-width="1"/><polyline points="916.60,50.20 916.60,49.48 916.61,48.77 916.67,48.11 916.78,47.50 916.96,46.96 917.22,46.50 917.57,46.13 918.00,45.84 918.51,45.63 919.10,45.50 919.75,45.43 920.44,45.40 921.16,45.40 921.88,45.40 922.60,45.40 923.27,45.35 923.90,45.26 924.47,45.11 924.95,44.87 925.36,44.56 925.67,44.15 925.91,43.67 926.06,43.10 926.15,42.47 926.20,41.80 926.20,41.08 926.20,40.36 926.20,39.64 926.23,38.95 926.30,38.30 926.43,37.71 926.64,37.20 926.93,36.77 927.30,36.42 927.76,36.16 928.30,35.98 928.91,35.87 929.57,35.81 930.28,35.80 931.00,35.80" fill="none" stroke="#1e8a3a" stroke-width="1"/><path d="M919.6 46.4 l1.8 1.8 M922.6 43.4 l1.8 1.8 M925.6 40.4 l1.8 1.8 M928.2 37.6 l1.6 1.6" stroke="#e79a66" stroke-width="0.5"/><path d="M933.7 42.2 h2.2 l-1.1 1.3z" fill="#444"/><text x="911.3" y="57.86" font-size="6" font-family='"Liberation Sans", sans-serif' fill="#2b2b2b" stroke="#2b2b2b" stroke-width="0.22" textLength="29.1" lengthAdjust="spacingAndGlyphs">OMICs data</text><text x="915.5" y="63.86" font-size="6" font-family='"Liberation Sans", sans-serif' fill="#2b2b2b" stroke="#2b2b2b" stroke-width="0.22" textLength="19.8" lengthAdjust="spacingAndGlyphs">analysis</text><rect x="948.8" y="40" width="4" height="8.6" fill="none" stroke="#7cc08a" stroke-width="0.7"/><text x="946" y="57.86" font-size="6" font-family='"Liberation Sans", sans-serif' fill="#2b2b2b" stroke="#2b2b2b" stroke-width="0.22" textLength="7" lengthAdjust="spacingAndGlyphs">Mu</text><text x="944.8" y="63.86" font-size="6" font-family='"Liberation Sans", sans-serif' fill="#2b2b2b" stroke="#2b2b2b" stroke-width="0.22" textLength="7.8" lengthAdjust="spacingAndGlyphs">dat</text><rect x="952.8" y="31.3" width="7.2" height="34.9" fill="#f4f4f4"/><path d="M955.4 47.2 l2.2 1.4 l-2.2 1.4z" fill="#555"/><rect x="0" y="66.4" width="960" height="13.8" fill="#ffffff"/><text x="5" y="76.55" font-size="6.8" font-family='"Liberation Sans", sans-serif' fill="#222" stroke="#222" stroke-width="0.25" textLength="15" lengthAdjust="spacingAndGlyphs">AR87</text><path d="M36.6 72.2 l1.5 -2.4 l1.5 2.4z M36.6 74.8 l1.5 2.4 l1.5 -2.4z" fill="#3a3a3a"/><line x1="42.5" y1="66.4" x2="42.5" y2="80.2" stroke="#dcdcdc" stroke-width="0.6"/><path d="M50.2 71.8 L54.8 76.4 M54.8 71.8 L50.2 76.4" stroke="#c4c4c4" stroke-width="0.7"/><path d="M63.8 74.2 L66.2 76.6 L71.2 71.6" fill="none" stroke="#c4c4c4" stroke-width="0.7"/><text x="79.2" y="77" font-size="8" font-family='"Liberation Serif", serif' font-style="italic" fill="#444">fx</text><line x1="90" y1="69.5" x2="90" y2="78.5" stroke="#dadada" stroke-width="0.5"/><path d="M954.8 72.6 h3.6 l-1.8 2.4z" fill="#555"/><rect x="0" y="80.1" width="960" height="1.5" fill="#c2c2c2"/><rect x="0" y="81.6" width="960" height="9.9" fill="#f6f6f6"/><rect x="0" y="91.5" width="9.5" height="483" fill="#f6f6f6"/><path d="M9.5 98.5H960 M9.5 104.5H960 M9.5 111.5H960 M9.5 117.5H960 M9.5 124.5H960 M9.5 130.5H960 M9.5 137.5H960 M9.5 143.5H960 M9.5 150.5H960 M9.5 158.5H960 M9.5 165.5H960 M9.5 172.5H960 M9.5 179.5H960 M9.5 186.5H960 M9.5 193.5H960 M9.5 200.5H960 M9.5 207.5H960 M9.5 214.5H960 M9.5 221.5H960 M9.5 228.5H960 M9.5 235.5H960 M9.5 242.5H960 M9.5 249.5H960 M9.5 256.5H960 M9.5 263.5H960 M9.5 270.5H960 M9.5 277.5H960 M9.5 284.5H960 M9.5 290.5H960 M9.5 297.5H960 M9.5 303.5H960 M9.5 310.5H960 M9.5 316.5H960 M9.5 323.5H960 M9.5 346.5H960 M9.5 370.5H960 M9.5 377.5H960 M9.5 384.5H960 M9.5 391.5H960 M9.5 398.5H960 M9.5 405.5H960 M9.5 412.5H960 M9.5 419.5H960 M9.5 426.5H960 M9.5 433.5H960 M9.5 440.5H960 M9.5 447.5H960 M9.5 454.5H960 M9.5 461.5H960 M9.5 468.5H960 M9.5 475.5H960 M9.5 482.5H960 M9.5 489.5H960 M9.5 496.5H960 M9.5 502.5H960 M9.5 509.5H960 M9.5 515.5H960 M9.5 522.5H960 M9.5 528.5H960 M9.5 535.5H960 M9.5 541.5H960 M9.5 548.5H960 M9.5 554.5H960 M9.5 561.5H960 M9.5 567.5H960 M9.5 574.5H960 M25.5 91.5V574.5 M72.5 91.5V574.5 M128.5 91.5V574.5 M167.5 91.5V574.5 M201.5 91.5V574.5 M237.5 91.5V574.5 M270.5 91.5V574.5 M304.5 91.5V574.5 M339.5 91.5V574.5 M362.5 91.5V574.5 M386.5 91.5V574.5 M409.5 91.5V574.5 M434.5 91.5V574.5 M483.5 91.5V574.5 M533.5 91.5V574.5 M597.5 91.5V574.5 M621.5 91.5V574.5 M644.5 91.5V574.5 M668.5 91.5V574.5 M705.5 91.5V574.5 M726.5 91.5V574.5 M750.5 91.5V574.5 M773.5 91.5V574.5 M797.5 91.5V574.5 M820.5 91.5V574.5 M844.5 91.5V574.5 M867.5 91.5V574.5 M891.5 91.5V574.5 M914.5 91.5V574.5 M938.5 91.5V574.5 M962.5 91.5V574.5" stroke="#e1e1e1" stroke-width="1" fill="none"/><path d="M25.5 81.6V91.5 M72.5 81.6V91.5 M128.5 81.6V91.5 M167.5 81.6V91.5 M201.5 81.6V91.5 M237.5 81.6V91.5 M270.5 81.6V91.5 M304.5 81.6V91.5 M339.5 81.6V91.5 M362.5 81.6V91.5 M386.5 81.6V91.5 M409.5 81.6V91.5 M434.5 81.6V91.5 M483.5 81.6V91.5 M533.5 81.6V91.5 M597.5 81.6V91.5 M621.5 81.6V91.5 M644.5 81.6V91.5 M668.5 81.6V91.5 M705.5 81.6V91.5 M726.5 81.6V91.5 M750.5 81.6V91.5 M773.5 81.6V91.5 M797.5 81.6V91.5 M820.5 81.6V91.5 M844.5 81.6V91.5 M867.5 81.6V91.5 M891.5 81.6V91.5 M914.5 81.6V91.5 M938.5 81.6V91.5 M962.5 81.6V91.5 M0 98.5H9.5 M0 104.5H9.5 M0 111.5H9.5 M0 117.5H9.5 M0 124.5H9.5 M0 130.5H9.5 M0 137.5H9.5 M0 143.5H9.5 M0 150.5H9.5 M0 158.5H9.5 M0 165.5H9.5 M0 172.5H9.5 M0 179.5H9.5 M0 186.5H9.5 M0 193.5H9.5 M0 200.5H9.5 M0 207.5H9.5 M0 214.5H9.5 M0 221.5H9.5 M0 228.5H9.5 M0 235.5H9.5 M0 242.5H9.5 M0 249.5H9.5 M0 256.5H9.5 M0 263.5H9.5 M0 270.5H9.5 M0 277.5H9.5 M0 284.5H9.5 M0 290.5H9.5 M0 297.5H9.5 M0 303.5H9.5 M0 310.5H9.5 M0 316.5H9.5 M0 323.5H9.5 M0 346.5H9.5 M0 370.5H9.5 M0 377.5H9.5 M0 384.5H9.5 M0 391.5H9.5 M0 398.5H9.5 M0 405.5H9.5 M0 412.5H9.5 M0 419.5H9.5 M0 426.5H9.5 M0 433.5H9.5 M0 440.5H9.5 M0 447.5H9.5 M0 454.5H9.5 M0 461.5H9.5 M0 468.5H9.5 M0 475.5H9.5 M0 482.5H9.5 M0 489.5H9.5 M0 496.5H9.5 M0 502.5H9.5 M0 509.5H9.5 M0 515.5H9.5 M0 522.5H9.5 M0 528.5H9.5 M0 535.5H9.5 M0 541.5H9.5 M0 548.5H9.5 M0 554.5H9.5 M0 561.5H9.5 M0 567.5H9.5 M0 574.5H9.5" stroke="#e2e2e2" stroke-width="1" fill="none"/><line x1="0" y1="91.5" x2="960" y2="91.5" stroke="#d6d6d6" stroke-width="1"/><line x1="9.5" y1="81.6" x2="9.5" y2="574.5" stroke="#d6d6d6" stroke-width="1"/><path d="M8.2 90.2 L8.2 83.4 L1.6 90.2z" fill="#dcdcdc"/><text x="17.5" y="88.9" font-size="5" font-family='"Liberation Sans", sans-serif' fill="#444" stroke="#444" stroke-width="0.2" text-anchor="middle">A</text><text x="49" y="88.9" font-size="5" font-family='"Liberation Sans", sans-serif' fill="#444" stroke="#444" stroke-width="0.2" text-anchor="middle">B</text><text x="100.5" y="88.9" font-size="5" font-family='"Liberation Sans", sans-serif' fill="#444" stroke="#444" stroke-width="0.2" text-anchor="middle">C</text><text x="148" y="88.9" font-size="5" font-family='"Liberation Sans", sans-serif' fill="#444" stroke="#444" stroke-width="0.2" text-anchor="middle">D</text><text x="184.5" y="88.9" font-size="5" font-family='"Liberation Sans", sans-serif' fill="#444" stroke="#444" stroke-width="0.2" text-anchor="middle">E</text><text x="219.5" y="88.9" font-size="5" font-family='"Liberation Sans", sans-serif' fill="#444" stroke="#444" stroke-width="0.2" text-anchor="middle">F</text><text x="254" y="88.9" font-size="5" font-family='"Liberation Sans", sans-serif' fill="#444" stroke="#444" stroke-width="0.2" text-anchor="middle">G</text><text x="287.5" y="88.9" font-size="5" font-family='"Liberation Sans", sans-serif' fill="#444" stroke="#444" stroke-width="0.2" text-anchor="middle">H</text><text x="322" y="88.9" font-size="5" font-family='"Liberation Sans", sans-serif' fill="#444" stroke="#444" stroke-width="0.2" text-anchor="middle">I</text><text x="351" y="88.9" font-size="5" font-family='"Liberation Sans", sans-serif' fill="#444" stroke="#444" stroke-width="0.2" text-anchor="middle">J</text><text x="374.5" y="88.9" font-size="5" font-family='"Liberation Sans", sans-serif' fill="#444" stroke="#444" stroke-width="0.2" text-anchor="middle">K</text><text x="398" y="88.9" font-size="5" font-family='"Liberation Sans", sans-serif' fill="#444" stroke="#444" stroke-width="0.2" text-anchor="middle">L</text><text x="422" y="88.9" font-size="5" font-family='"Liberation Sans", sans-serif' fill="#444" stroke="#444" stroke-width="0.2" text-anchor="middle">M</text><text x="459" y="88.9" font-size="5" font-family='"Liberation Sans", sans-serif' fill="#444" stroke="#444" stroke-width="0.2" text-anchor="middle">N</text><text x="508.5" y="88.9" font-size="5" font-family='"Liberation Sans", sans-serif' fill="#444" stroke="#444" stroke-width="0.2" text-anchor="middle">O</text><text x="565.5" y="88.9" font-size="5" font-family='"Liberation Sans", sans-serif' fill="#444" stroke="#444" stroke-width="0.2" text-anchor="middle">P</text><text x="609.5" y="88.9" font-size="5" font-family='"Liberation Sans", sans-serif' fill="#444" stroke="#444" stroke-width="0.2" text-anchor="middle">Q</text><text x="633" y="88.9" font-size="5" font-family='"Liberation Sans", sans-serif' fill="#444" stroke="#444" stroke-width="0.2" text-anchor="middle">R</text><text x="656.5" y="88.9" font-size="5" font-family='"Liberation Sans", sans-serif' fill="#444" stroke="#444" stroke-width="0.2" text-anchor="middle">S</text><text x="687" y="88.9" font-size="5" font-family='"Liberation Sans", sans-serif' fill="#444" stroke="#444" stroke-width="0.2" text-anchor="middle">T</text><text x="716" y="88.9" font-size="5" font-family='"Liberation Sans", sans-serif' fill="#444" stroke="#444" stroke-width="0.2" text-anchor="middle">U</text><text x="738.5" y="88.9" font-size="5" font-family='"Liberation Sans", sans-serif' fill="#444" stroke="#444" stroke-width="0.2" text-anchor="middle">V</text><text x="762" y="88.9" font-size="5" font-family='"Liberation Sans", sans-serif' fill="#444" stroke="#444" stroke-width="0.2" text-anchor="middle">W</text><text x="785.5" y="88.9" font-size="5" font-family='"Liberation Sans", sans-serif' fill="#444" stroke="#444" stroke-width="0.2" text-anchor="middle">X</text><text x="809" y="88.9" font-size="5" font-family='"Liberation Sans", sans-serif' fill="#444" stroke="#444" stroke-width="0.2" text-anchor="middle">Y</text><text x="832.5" y="88.9" font-size="5" font-family='"Liberation Sans", sans-serif' fill="#444" stroke="#444" stroke-width="0.2" text-anchor="middle">Z</text><text x="856" y="88.9" font-size="5" font-family='"Liberation Sans", sans-serif' fill="#444" stroke="#444" stroke-width="0.2" text-anchor="middle">AA</text><text x="879.5" y="88.9" font-size="5" font-family='"Liberation Sans", sans-serif' fill="#444" stroke="#444" stroke-width="0.2" text-anchor="middle">AB</text><text x="903" y="88.9" font-size="5" font-family='"Liberation Sans", sans-serif' fill="#444" stroke="#444" stroke-width="0.2" text-anchor="middle">AC</text><text x="926.5" y="88.9" font-size="5" font-family='"Liberation Sans", sans-serif' fill="#444" stroke="#444" stroke-width="0.2" text-anchor="middle">AD</text><text x="950.5" y="88.9" font-size="5" font-family='"Liberation Sans", sans-serif' fill="#444" stroke="#444" stroke-width="0.2" text-anchor="middle">AE</text><text x="5.1" y="96.96" font-size="4.9" font-family='"Liberation Sans", sans-serif' fill="#333" stroke="#333" stroke-width="0.2" text-anchor="middle">1</text><text x="5.1" y="103.46" font-size="4.9" font-family='"Liberation Sans", sans-serif' fill="#333" stroke="#333" stroke-width="0.2" text-anchor="middle">2</text><text x="5.1" y="109.96" font-size="4.9" font-family='"Liberation Sans", sans-serif' fill="#333" stroke="#333" stroke-width="0.2" text-anchor="middle">3</text><text x="5.1" y="116.46" font-size="4.9" font-family='"Liberation Sans", sans-serif' fill="#333" stroke="#333" stroke-width="0.2" text-anchor="middle">4</text><text x="5.1" y="122.96" font-size="4.9" font-family='"Liberation Sans", sans-serif' fill="#333" stroke="#333" stroke-width="0.2" text-anchor="middle">5</text><text x="5.1" y="129.46" font-size="4.9" font-family='"Liberation Sans", sans-serif' fill="#333" stroke="#333" stroke-width="0.2" text-anchor="middle">6</text><text x="5.1" y="135.96" font-size="4.9" font-family='"Liberation Sans", sans-serif' fill="#333" stroke="#333" stroke-width="0.2" text-anchor="middle">7</text><text x="5.1" y="142.46" font-size="4.9" font-family='"Liberation Sans", sans-serif' fill="#333" stroke="#333" stroke-width="0.2" text-anchor="middle">8</text><text x="5.1" y="148.96" font-size="4.9" font-family='"Liberation Sans", sans-serif' fill="#333" stroke="#333" stroke-width="0.2" text-anchor="middle">9</text><text x="5.1" y="156.46" font-size="4.9" font-family='"Liberation Sans", sans-serif' fill="#333" stroke="#333" stroke-width="0.2" text-anchor="middle">10</text><text x="5.1" y="163.96" font-size="4.9" font-family='"Liberation Sans", sans-serif' fill="#333" stroke="#333" stroke-width="0.2" text-anchor="middle">11</text><text x="5.1" y="170.96" font-size="4.9" font-family='"Liberation Sans", sans-serif' fill="#333" stroke="#333" stroke-width="0.2" text-anchor="middle">12</text><text x="5.1" y="177.96" font-size="4.9" font-family='"Liberation Sans", sans-serif' fill="#333" stroke="#333" stroke-width="0.2" text-anchor="middle">13</text><text x="5.1" y="184.96" font-size="4.9" font-family='"Liberation Sans", sans-serif' fill="#333" stroke="#333" stroke-width="0.2" text-anchor="middle">14</text><text x="5.1" y="191.96" font-size="4.9" font-family='"Liberation Sans", sans-serif' fill="#333" stroke="#333" stroke-width="0.2" text-anchor="middle">15</text><text x="5.1" y="198.96" font-size="4.9" font-family='"Liberation Sans", sans-serif' fill="#333" stroke="#333" stroke-width="0.2" text-anchor="middle">16</text><text x="5.1" y="205.96" font-size="4.9" font-family='"Liberation Sans", sans-serif' fill="#333" stroke="#333" stroke-width="0.2" text-anchor="middle">17</text><text x="5.1" y="212.96" font-size="4.9" font-family='"Liberation Sans", sans-serif' fill="#333" stroke="#333" stroke-width="0.2" text-anchor="middle">18</text><text x="5.1" y="219.96" font-size="4.9" font-family='"Liberation Sans", sans-serif' fill="#333" stroke="#333" stroke-width="0.2" text-anchor="middle">19</text><text x="5.1" y="226.96" font-size="4.9" font-family='"Liberation Sans", sans-serif' fill="#333" stroke="#333" stroke-width="0.2" text-anchor="middle">20</text><text x="5.1" y="233.96" font-size="4.9" font-family='"Liberation Sans", sans-serif' fill="#333" stroke="#333" stroke-width="0.2" text-anchor="middle">21</text><text x="5.1" y="240.96" font-size="4.9" font-family='"Liberation Sans", sans-serif' fill="#333" stroke="#333" stroke-width="0.2" text-anchor="middle">22</text><text x="5.1" y="247.96" font-size="4.9" font-family='"Liberation Sans", sans-serif' fill="#333" stroke="#333" stroke-width="0.2" text-anchor="middle">23</text><text x="5.1" y="254.96" font-size="4.9" font-family='"Liberation Sans", sans-serif' fill="#333" stroke="#333" stroke-width="0.2" text-anchor="middle">24</text><text x="5.1" y="261.96" font-size="4.9" font-family='"Liberation Sans", sans-serif' fill="#333" stroke="#333" stroke-width="0.2" text-anchor="middle">25</text><text x="5.1" y="268.96" font-size="4.9" font-family='"Liberation Sans", sans-serif' fill="#333" stroke="#333" stroke-width="0.2" text-anchor="middle">26</text><text x="5.1" y="275.96" font-size="4.9" font-family='"Liberation Sans", sans-serif' fill="#333" stroke="#333" stroke-width="0.2" text-anchor="middle">27</text><text x="5.1" y="282.96" font-size="4.9" font-family='"Liberation Sans", sans-serif' fill="#333" stroke="#333" stroke-width="0.2" text-anchor="middle">28</text><text x="5.1" y="289.46" font-size="4.9" font-family='"Liberation Sans", sans-serif' fill="#333" stroke="#333" stroke-width="0.2" text-anchor="middle">29</text><text x="5.1" y="295.96" font-size="4.9" font-family='"Liberation Sans", sans-serif' fill="#333" stroke="#333" stroke-width="0.2" text-anchor="middle">30</text><text x="5.1" y="302.46" font-size="4.9" font-family='"Liberation Sans", sans-serif' fill="#333" stroke="#333" stroke-width="0.2" text-anchor="middle">31</text><text x="5.1" y="308.96" font-size="4.9" font-family='"Liberation Sans", sans-serif' fill="#333" stroke="#333" stroke-width="0.2" text-anchor="middle">32</text><text x="5.1" y="315.46" font-size="4.9" font-family='"Liberation Sans", sans-serif' fill="#333" stroke="#333" stroke-width="0.2" text-anchor="middle">33</text><text x="5.1" y="321.96" font-size="4.9" font-family='"Liberation Sans", sans-serif' fill="#333" stroke="#333" stroke-width="0.2" text-anchor="middle">34</text><text x="5.1" y="344.86" font-size="4.9" font-family='"Liberation Sans", sans-serif' fill="#333" stroke="#333" stroke-width="0.2" text-anchor="middle">35</text><text x="5.1" y="368.86" font-size="4.9" font-family='"Liberation Sans", sans-serif' fill="#333" stroke="#333" stroke-width="0.2" text-anchor="middle">36</text><text x="5.1" y="375.96" font-size="4.9" font-family='"Liberation Sans", sans-serif' fill="#333" stroke="#333" stroke-width="0.2" text-anchor="middle">37</text><text x="5.1" y="382.96" font-size="4.9" font-family='"Liberation Sans", sans-serif' fill="#333" stroke="#333" stroke-width="0.2" text-anchor="middle">38</text><text x="5.1" y="389.96" font-size="4.9" font-family='"Liberation Sans", sans-serif' fill="#333" stroke="#333" stroke-width="0.2" text-anchor="middle">39</text><text x="5.1" y="396.96" font-size="4.9" font-family='"Liberation Sans", sans-serif' fill="#333" stroke="#333" stroke-width="0.2" text-anchor="middle">40</text><text x="5.1" y="403.96" font-size="4.9" font-family='"Liberation Sans", sans-serif' fill="#333" stroke="#333" stroke-width="0.2" text-anchor="middle">41</text><text x="5.1" y="410.96" font-size="4.9" font-family='"Liberation Sans", sans-serif' fill="#333" stroke="#333" stroke-width="0.2" text-anchor="middle">42</text><text x="5.1" y="417.96" font-size="4.9" font-family='"Liberation Sans", sans-serif' fill="#333" stroke="#333" stroke-width="0.2" text-anchor="middle">43</text><text x="5.1" y="424.96" font-size="4.9" font-family='"Liberation Sans", sans-serif' fill="#333" stroke="#333" stroke-width="0.2" text-anchor="middle">44</text><text x="5.1" y="431.96" font-size="4.9" font-family='"Liberation Sans", sans-serif' fill="#333" stroke="#333" stroke-width="0.2" text-anchor="middle">45</text><text x="5.1" y="438.96" font-size="4.9" font-family='"Liberation Sans", sans-serif' fill="#333" stroke="#333" stroke-width="0.2" text-anchor="middle">46</text><text x="5.1" y="445.96" font-size="4.9" font-family='"Liberation Sans", sans-serif' fill="#333" stroke="#333" stroke-width="0.2" text-anchor="middle">47</text><text x="5.1" y="452.96" font-size="4.9" font-family='"Liberation Sans", sans-serif' fill="#333" stroke="#333" stroke-width="0.2" text-anchor="middle">48</text><text x="5.1" y="459.96" font-size="4.9" font-family='"Liberation Sans", sans-serif' fill="#333" stroke="#333" stroke-width="0.2" text-anchor="middle">49</text><text x="5.1" y="466.96" font-size="4.9" font-family='"Liberation Sans", sans-serif' fill="#333" stroke="#333" stroke-width="0.2" text-anchor="middle">50</text><text x="5.1" y="473.96" font-size="4.9" font-family='"Liberation Sans", sans-serif' fill="#333" stroke="#333" stroke-width="0.2" text-anchor="middle">51</text><text x="5.1" y="480.96" font-size="4.9" font-family='"Liberation Sans", sans-serif' fill="#333" stroke="#333" stroke-width="0.2" text-anchor="middle">52</text><text x="5.1" y="487.96" font-size="4.9" font-family='"Liberation Sans", sans-serif' fill="#333" stroke="#333" stroke-width="0.2" text-anchor="middle">53</text><text x="5.1" y="494.96" font-size="4.9" font-family='"Liberation Sans", sans-serif' fill="#333" stroke="#333" stroke-width="0.2" text-anchor="middle">54</text><text x="5.1" y="501.46" font-size="4.9" font-family='"Liberation Sans", sans-serif' fill="#333" stroke="#333" stroke-width="0.2" text-anchor="middle">55</text><text x="5.1" y="507.96" font-size="4.9" font-family='"Liberation Sans", sans-serif' fill="#333" stroke="#333" stroke-width="0.2" text-anchor="middle">56</text><text x="5.1" y="514.46" font-size="4.9" font-family='"Liberation Sans", sans-serif' fill="#333" stroke="#333" stroke-width="0.2" text-anchor="middle">57</text><text x="5.1" y="520.96" font-size="4.9" font-family='"Liberation Sans", sans-serif' fill="#333" stroke="#333" stroke-width="0.2" text-anchor="middle">58</text><text x="5.1" y="527.46" font-size="4.9" font-family='"Liberation Sans", sans-serif' fill="#333" stroke="#333" stroke-width="0.2" text-anchor="middle">59</text><text x="5.1" y="533.96" font-size="4.9" font-family='"Liberation Sans", sans-serif' fill="#333" stroke="#333" stroke-width="0.2" text-anchor="middle">60</text><text x="5.1" y="540.46" font-size="4.9" font-family='"Liberation Sans", sans-serif' fill="#333" stroke="#333" stroke-width="0.2" text-anchor="middle">61</text><text x="5.1" y="546.96" font-size="4.9" font-family='"Liberation Sans", sans-serif' fill="#333" stroke="#333" stroke-width="0.2" text-anchor="middle">62</text><text x="5.1" y="553.46" font-size="4.9" font-family='"Liberation Sans", sans-serif' fill="#333" stroke="#333" stroke-width="0.2" text-anchor="middle">63</text><text x="5.1" y="559.96" font-size="4.9" font-family='"Liberation Sans", sans-serif' fill="#333" stroke="#333" stroke-width="0.2" text-anchor="middle">64</text><text x="5.1" y="566.46" font-size="4.9" font-family='"Liberation Sans", sans-serif' fill="#333" stroke="#333" stroke-width="0.2" text-anchor="middle">65</text><text x="5.1" y="572.96" font-size="4.9" font-family='"Liberation Sans", sans-serif' fill="#333" stroke="#333" stroke-width="0.2" text-anchor="middle">66</text><rect x="434.5" y="150.5" width="163" height="134" fill="#fff"/><path d="M434.5 158.5H597.5 M434.5 165.5H597.5 M434.5 172.5H597.5 M434.5 179.5H597.5 M434.5 186.5H597.5 M434.5 193.5H597.5 M434.5 200.5H597.5 M434.5 207.5H597.5 M434.5 214.5H597.5 M434.5 221.5H597.5 M434.5 228.5H597.5 M434.5 235.5H597.5 M434.5 242.5H597.5 M434.5 249.5H597.5 M434.5 256.5H597.5 M434.5 263.5H597.5 M434.5 270.5H597.5 M434.5 277.5H597.5 M434.5 284.5H597.5 M434.5 158.5V284.5 M483.5 158.5V284.5 M533.5 158.5V284.5 M597.5 158.5V284.5" stroke="#3a3a3a" stroke-width="0.75" fill="none"/><path d="M483.5 150.5V158.5 M533.5 150.5V158.5" stroke="#3a3a3a" stroke-width="0.75" fill="none"/><rect x="434.5" y="150.5" width="163" height="8" fill="none" stroke="#2a2a2a" stroke-width="1"/><text x="452.01" y="156.71" font-size="5.3" font-family='"Liberation Sans", sans-serif' fill="#111" stroke="#111" stroke-width="0.16" font-weight="bold" textLength="13.99" lengthAdjust="spacingAndGlyphs">Month</text><text x="495.41" y="156.71" font-size="5.3" font-family='"Liberation Sans", sans-serif' fill="#111" stroke="#111" stroke-width="0.16" font-weight="bold" textLength="26.19" lengthAdjust="spacingAndGlyphs">Passengers</text><text x="546.58" y="156.71" font-size="5.3" font-family='"Liberation Sans", sans-serif' fill="#111" stroke="#111" stroke-width="0.16" font-weight="bold" textLength="37.84" lengthAdjust="spacingAndGlyphs">Log(Passengers)</text><text x="450.57" y="163.71" font-size="5.3" font-family='"Liberation Sans", sans-serif' fill="#111" stroke="#111" stroke-width="0.06" textLength="16.86" lengthAdjust="spacingAndGlyphs">janv-49</text><text x="504.4" y="163.71" font-size="5.3" font-family='"Liberation Sans", sans-serif' fill="#111" stroke="#111" stroke-width="0.06" textLength="8.2" lengthAdjust="spacingAndGlyphs">112</text><text x="559.07" y="163.71" font-size="5.3" font-family='"Liberation Sans", sans-serif' fill="#111" stroke="#111" stroke-width="0.06" textLength="12.87" lengthAdjust="spacingAndGlyphs">4,718</text><text x="451" y="170.71" font-size="5.3" font-family='"Liberation Sans", sans-serif' fill="#111" stroke="#111" stroke-width="0.06" textLength="16" lengthAdjust="spacingAndGlyphs">févr-49</text><text x="504.4" y="170.71" font-size="5.3" font-family='"Liberation Sans", sans-serif' fill="#111" stroke="#111" stroke-width="0.06" textLength="8.2" lengthAdjust="spacingAndGlyphs">118</text><text x="559.07" y="170.71" font-size="5.3" font-family='"Liberation Sans", sans-serif' fill="#111" stroke="#111" stroke-width="0.06" textLength="12.87" lengthAdjust="spacingAndGlyphs">4,771</text><text x="449.57" y="177.71" font-size="5.3" font-family='"Liberation Sans", sans-serif' fill="#111" stroke="#111" stroke-width="0.06" textLength="18.86" lengthAdjust="spacingAndGlyphs">mars-49</text><text x="504.21" y="177.71" font-size="5.3" font-family='"Liberation Sans", sans-serif' fill="#111" stroke="#111" stroke-width="0.06" textLength="8.58" lengthAdjust="spacingAndGlyphs">132</text><text x="559.07" y="177.71" font-size="5.3" font-family='"Liberation Sans", sans-serif' fill="#111" stroke="#111" stroke-width="0.06" textLength="12.87" lengthAdjust="spacingAndGlyphs">4,883</text><text x="451.71" y="184.71" font-size="5.3" font-family='"Liberation Sans", sans-serif' fill="#111" stroke="#111" stroke-width="0.06" textLength="14.57" lengthAdjust="spacingAndGlyphs">avr-49</text><text x="504.21" y="184.71" font-size="5.3" font-family='"Liberation Sans", sans-serif' fill="#111" stroke="#111" stroke-width="0.06" textLength="8.58" lengthAdjust="spacingAndGlyphs">129</text><text x="559.07" y="184.71" font-size="5.3" font-family='"Liberation Sans", sans-serif' fill="#111" stroke="#111" stroke-width="0.06" textLength="12.87" lengthAdjust="spacingAndGlyphs">4,860</text><text x="451.14" y="191.71" font-size="5.3" font-family='"Liberation Sans", sans-serif' fill="#111" stroke="#111" stroke-width="0.06" textLength="15.71" lengthAdjust="spacingAndGlyphs">mai-49</text><text x="504.21" y="191.71" font-size="5.3" font-family='"Liberation Sans", sans-serif' fill="#111" stroke="#111" stroke-width="0.06" textLength="8.58" lengthAdjust="spacingAndGlyphs">121</text><text x="559.07" y="191.71" font-size="5.3" font-family='"Liberation Sans", sans-serif' fill="#111" stroke="#111" stroke-width="0.06" textLength="12.87" lengthAdjust="spacingAndGlyphs">4,796</text><text x="451.28" y="198.71" font-size="5.3" font-family='"Liberation Sans", sans-serif' fill="#111" stroke="#111" stroke-width="0.06" textLength="15.43" lengthAdjust="spacingAndGlyphs">juin-49</text><text x="504.21" y="198.71" font-size="5.3" font-family='"Liberation Sans", sans-serif' fill="#111" stroke="#111" stroke-width="0.06" textLength="8.58" lengthAdjust="spacingAndGlyphs">135</text><text x="559.07" y="198.71" font-size="5.3" font-family='"Liberation Sans", sans-serif' fill="#111" stroke="#111" stroke-width="0.06" textLength="12.87" lengthAdjust="spacingAndGlyphs">4,905</text><text x="452.14" y="205.71" font-size="5.3" font-family='"Liberation Sans", sans-serif' fill="#111" stroke="#111" stroke-width="0.06" textLength="13.72" lengthAdjust="spacingAndGlyphs">juil-49</text><text x="504.21" y="205.71" font-size="5.3" font-family='"Liberation Sans", sans-serif' fill="#111" stroke="#111" stroke-width="0.06" textLength="8.58" lengthAdjust="spacingAndGlyphs">148</text><text x="559.07" y="205.71" font-size="5.3" font-family='"Liberation Sans", sans-serif' fill="#111" stroke="#111" stroke-width="0.06" textLength="12.87" lengthAdjust="spacingAndGlyphs">4,997</text><text x="450.28" y="212.71" font-size="5.3" font-family='"Liberation Sans", sans-serif' fill="#111" stroke="#111" stroke-width="0.06" textLength="17.44" lengthAdjust="spacingAndGlyphs">août-49</text><text x="504.21" y="212.71" font-size="5.3" font-family='"Liberation Sans", sans-serif' fill="#111" stroke="#111" stroke-width="0.06" textLength="8.58" lengthAdjust="spacingAndGlyphs">148</text><text x="559.07" y="212.71" font-size="5.3" font-family='"Liberation Sans", sans-serif' fill="#111" stroke="#111" stroke-width="0.06" textLength="12.87" lengthAdjust="spacingAndGlyphs">4,997</text><text x="450.43" y="219.71" font-size="5.3" font-family='"Liberation Sans", sans-serif' fill="#111" stroke="#111" stroke-width="0.06" textLength="17.15" lengthAdjust="spacingAndGlyphs">sept-49</text><text x="504.21" y="219.71" font-size="5.3" font-family='"Liberation Sans", sans-serif' fill="#111" stroke="#111" stroke-width="0.06" textLength="8.58" lengthAdjust="spacingAndGlyphs">136</text><text x="559.07" y="219.71" font-size="5.3" font-family='"Liberation Sans", sans-serif' fill="#111" stroke="#111" stroke-width="0.06" textLength="12.87" lengthAdjust="spacingAndGlyphs">4,913</text><text x="451.86" y="226.71" font-size="5.3" font-family='"Liberation Sans", sans-serif' fill="#111" stroke="#111" stroke-width="0.06" textLength="14.29" lengthAdjust="spacingAndGlyphs">oct-49</text><text x="504.4" y="226.71" font-size="5.3" font-family='"Liberation Sans", sans-serif' fill="#111" stroke="#111" stroke-width="0.06" textLength="8.2" lengthAdjust="spacingAndGlyphs">119</text><text x="559.07" y="226.71" font-size="5.3" font-family='"Liberation Sans", sans-serif' fill="#111" stroke="#111" stroke-width="0.06" textLength="12.87" lengthAdjust="spacingAndGlyphs">4,779</text><text x="451.14" y="233.71" font-size="5.3" font-family='"Liberation Sans", sans-serif' fill="#111" stroke="#111" stroke-width="0.06" textLength="15.72" lengthAdjust="spacingAndGlyphs">nov-49</text><text x="504.21" y="233.71" font-size="5.3" font-family='"Liberation Sans", sans-serif' fill="#111" stroke="#111" stroke-width="0.06" textLength="8.58" lengthAdjust="spacingAndGlyphs">104</text><text x="559.07" y="233.71" font-size="5.3" font-family='"Liberation Sans", sans-serif' fill="#111" stroke="#111" stroke-width="0.06" textLength="12.87" lengthAdjust="spacingAndGlyphs">4,644</text><text x="451.14" y="240.71" font-size="5.3" font-family='"Liberation Sans", sans-serif' fill="#111" stroke="#111" stroke-width="0.06" textLength="15.72" lengthAdjust="spacingAndGlyphs">déc-49</text><text x="504.4" y="240.71" font-size="5.3" font-family='"Liberation Sans", sans-serif' fill="#111" stroke="#111" stroke-width="0.06" textLength="8.2" lengthAdjust="spacingAndGlyphs">118</text><text x="559.07" y="240.71" font-size="5.3" font-family='"Liberation Sans", sans-serif' fill="#111" stroke="#111" stroke-width="0.06" textLength="12.87" lengthAdjust="spacingAndGlyphs">4,771</text><text x="450.57" y="247.71" font-size="5.3" font-family='"Liberation Sans", sans-serif' fill="#111" stroke="#111" stroke-width="0.06" textLength="16.86" lengthAdjust="spacingAndGlyphs">janv-50</text><text x="504.4" y="247.71" font-size="5.3" font-family='"Liberation Sans", sans-serif' fill="#111" stroke="#111" stroke-width="0.06" textLength="8.2" lengthAdjust="spacingAndGlyphs">115</text><text x="559.07" y="247.71" font-size="5.3" font-family='"Liberation Sans", sans-serif' fill="#111" stroke="#111" stroke-width="0.06" textLength="12.87" lengthAdjust="spacingAndGlyphs">4,745</text><text x="451" y="254.71" font-size="5.3" font-family='"Liberation Sans", sans-serif' fill="#111" stroke="#111" stroke-width="0.06" textLength="16" lengthAdjust="spacingAndGlyphs">févr-50</text><text x="504.21" y="254.71" font-size="5.3" font-family='"Liberation Sans", sans-serif' fill="#111" stroke="#111" stroke-width="0.06" textLength="8.58" lengthAdjust="spacingAndGlyphs">126</text><text x="559.07" y="254.71" font-size="5.3" font-family='"Liberation Sans", sans-serif' fill="#111" stroke="#111" stroke-width="0.06" textLength="12.87" lengthAdjust="spacingAndGlyphs">4,836</text><text x="449.57" y="261.71" font-size="5.3" font-family='"Liberation Sans", sans-serif' fill="#111" stroke="#111" stroke-width="0.06" textLength="18.86" lengthAdjust="spacingAndGlyphs">mars-50</text><text x="504.21" y="261.71" font-size="5.3" font-family='"Liberation Sans", sans-serif' fill="#111" stroke="#111" stroke-width="0.06" textLength="8.58" lengthAdjust="spacingAndGlyphs">141</text><text x="559.07" y="261.71" font-size="5.3" font-family='"Liberation Sans", sans-serif' fill="#111" stroke="#111" stroke-width="0.06" textLength="12.87" lengthAdjust="spacingAndGlyphs">4,949</text><text x="451.71" y="268.71" font-size="5.3" font-family='"Liberation Sans", sans-serif' fill="#111" stroke="#111" stroke-width="0.06" textLength="14.57" lengthAdjust="spacingAndGlyphs">avr-50</text><text x="504.21" y="268.71" font-size="5.3" font-family='"Liberation Sans", sans-serif' fill="#111" stroke="#111" stroke-width="0.06" textLength="8.58" lengthAdjust="spacingAndGlyphs">135</text><text x="559.07" y="268.71" font-size="5.3" font-family='"Liberation Sans", sans-serif' fill="#111" stroke="#111" stroke-width="0.06" textLength="12.87" lengthAdjust="spacingAndGlyphs">4,905</text><text x="451.14" y="275.71" font-size="5.3" font-family='"Liberation Sans", sans-serif' fill="#111" stroke="#111" stroke-width="0.06" textLength="15.71" lengthAdjust="spacingAndGlyphs">mai-50</text><text x="504.21" y="275.71" font-size="5.3" font-family='"Liberation Sans", sans-serif' fill="#111" stroke="#111" stroke-width="0.06" textLength="8.58" lengthAdjust="spacingAndGlyphs">125</text><text x="559.07" y="275.71" font-size="5.3" font-family='"Liberation Sans", sans-serif' fill="#111" stroke="#111" stroke-width="0.06" textLength="12.87" lengthAdjust="spacingAndGlyphs">4,828</text><text x="451.28" y="282.71" font-size="5.3" font-family='"Liberation Sans", sans-serif' fill="#111" stroke="#111" stroke-width="0.06" textLength="15.43" lengthAdjust="spacingAndGlyphs">juin-50</text><text x="504.21" y="282.71" font-size="5.3" font-family='"Liberation Sans", sans-serif' fill="#111" stroke="#111" stroke-width="0.06" textLength="8.58" lengthAdjust="spacingAndGlyphs">149</text><text x="559.07" y="282.71" font-size="5.3" font-family='"Liberation Sans", sans-serif' fill="#111" stroke="#111" stroke-width="0.06" textLength="12.87" lengthAdjust="spacingAndGlyphs">5,004</text><rect x="25.5" y="346.5" width="314" height="150" fill="#fff"/><path d="M25.5 370.5H339.5 M25.5 377.5H339.5 M25.5 384.5H339.5 M25.5 391.5H339.5 M25.5 398.5H339.5 M25.5 405.5H339.5 M25.5 412.5H339.5 M25.5 419.5H339.5 M25.5 426.5H339.5 M25.5 433.5H339.5 M25.5 440.5H339.5 M25.5 447.5H339.5 M25.5 454.5H339.5 M25.5 461.5H339.5 M25.5 468.5H339.5 M25.5 475.5H339.5 M25.5 482.5H339.5 M25.5 489.5H339.5 M25.5 496.5H339.5 M25.5 370.5V496.5 M72.5 370.5V496.5 M128.5 370.5V496.5 M167.5 370.5V496.5 M201.5 370.5V496.5 M237.5 370.5V496.5 M270.5 370.5V496.5 M304.5 370.5V496.5 M339.5 370.5V496.5" stroke="#3a3a3a" stroke-width="0.75" fill="none"/><path d="M72.5 346.5V370.5 M128.5 346.5V370.5 M167.5 346.5V370.5 M201.5 346.5V370.5 M237.5 346.5V370.5 M270.5 346.5V370.5 M304.5 346.5V370.5" stroke="#3a3a3a" stroke-width="0.75" fill="none"/><rect x="25.5" y="346.5" width="314" height="24" fill="none" stroke="#4a4a4a" stroke-width="1.1"/><text x="42.95" y="360.98" font-size="5.5" font-family='"Liberation Sans", sans-serif' fill="#111" stroke="#111" stroke-width="0.16" font-weight="bold" textLength="12.11" lengthAdjust="spacingAndGlyphs">State</text><text x="79.05" y="360.98" font-size="5.5" font-family='"Liberation Sans", sans-serif' fill="#111" stroke="#111" stroke-width="0.16" font-weight="bold" textLength="42.91" lengthAdjust="spacingAndGlyphs">Net Domestic Mig.</text><text x="129.71" y="353.98" font-size="5.5" font-family='"Liberation Sans", sans-serif' fill="#111" stroke="#111" stroke-width="0.16" font-weight="bold" textLength="36.59" lengthAdjust="spacingAndGlyphs">Federal/Civilian</text><text x="135.35" y="360.98" font-size="5.5" font-family='"Liberation Sans", sans-serif' fill="#111" stroke="#111" stroke-width="0.16" font-weight="bold" textLength="25.31" lengthAdjust="spacingAndGlyphs">move from</text><text x="139.75" y="367.98" font-size="5.5" font-family='"Liberation Sans", sans-serif' fill="#111" stroke="#111" stroke-width="0.16" font-weight="bold" textLength="16.5" lengthAdjust="spacingAndGlyphs">abroad</text><text x="176.11" y="357.48" font-size="5.5" font-family='"Liberation Sans", sans-serif' fill="#111" stroke="#111" stroke-width="0.16" font-weight="bold" textLength="16.77" lengthAdjust="spacingAndGlyphs">Net Int.</text><text x="173.36" y="364.48" font-size="5.5" font-family='"Liberation Sans", sans-serif' fill="#111" stroke="#111" stroke-width="0.16" font-weight="bold" textLength="22.27" lengthAdjust="spacingAndGlyphs">Migration</text><text x="203.96" y="360.98" font-size="5.5" font-family='"Liberation Sans", sans-serif' fill="#111" stroke="#111" stroke-width="0.16" font-weight="bold" textLength="31.08" lengthAdjust="spacingAndGlyphs">Period Births</text><text x="246.3" y="357.48" font-size="5.5" font-family='"Liberation Sans", sans-serif' fill="#111" stroke="#111" stroke-width="0.16" font-weight="bold" textLength="15.4" lengthAdjust="spacingAndGlyphs">Period</text><text x="245.75" y="364.48" font-size="5.5" font-family='"Liberation Sans", sans-serif' fill="#111" stroke="#111" stroke-width="0.16" font-weight="bold" textLength="16.51" lengthAdjust="spacingAndGlyphs">Deaths</text><text x="272.02" y="360.98" font-size="5.5" font-family='"Liberation Sans", sans-serif' fill="#111" stroke="#111" stroke-width="0.16" font-weight="bold" textLength="30.95" lengthAdjust="spacingAndGlyphs">&lt;65 Pop. Est.</text><text x="306.52" y="360.98" font-size="5.5" font-family='"Liberation Sans", sans-serif' fill="#111" stroke="#111" stroke-width="0.16" font-weight="bold" textLength="30.95" lengthAdjust="spacingAndGlyphs">&gt;65 Pop. Est.</text><text x="38.85" y="375.71" font-size="5.3" font-family='"Liberation Sans", sans-serif' fill="#111" stroke="#111" stroke-width="0.06" textLength="20.29" lengthAdjust="spacingAndGlyphs">Alabama</text><text x="94.64" y="375.71" font-size="5.3" font-family='"Liberation Sans", sans-serif' fill="#111" stroke="#111" stroke-width="0.06" textLength="11.72" lengthAdjust="spacingAndGlyphs">-1,78</text><text x="142.14" y="375.71" font-size="5.3" font-family='"Liberation Sans", sans-serif' fill="#111" stroke="#111" stroke-width="0.06" textLength="11.72" lengthAdjust="spacingAndGlyphs">-0,02</text><text x="179.5" y="375.71" font-size="5.3" font-family='"Liberation Sans", sans-serif' fill="#111" stroke="#111" stroke-width="0.06" textLength="10.01" lengthAdjust="spacingAndGlyphs">0,69</text><text x="213.07" y="375.71" font-size="5.3" font-family='"Liberation Sans", sans-serif' fill="#111" stroke="#111" stroke-width="0.06" textLength="12.87" lengthAdjust="spacingAndGlyphs">14,41</text><text x="247.57" y="375.71" font-size="5.3" font-family='"Liberation Sans", sans-serif' fill="#111" stroke="#111" stroke-width="0.06" textLength="12.87" lengthAdjust="spacingAndGlyphs">10,28</text><text x="279.64" y="375.71" font-size="5.3" font-family='"Liberation Sans", sans-serif' fill="#111" stroke="#111" stroke-width="0.06" textLength="15.72" lengthAdjust="spacingAndGlyphs">869,21</text><text x="314.14" y="375.71" font-size="5.3" font-family='"Liberation Sans", sans-serif' fill="#111" stroke="#111" stroke-width="0.06" textLength="15.72" lengthAdjust="spacingAndGlyphs">130,79</text><text x="41.28" y="382.71" font-size="5.3" font-family='"Liberation Sans", sans-serif' fill="#111" stroke="#111" stroke-width="0.06" textLength="15.43" lengthAdjust="spacingAndGlyphs">Alaska</text><text x="94.64" y="382.71" font-size="5.3" font-family='"Liberation Sans", sans-serif' fill="#111" stroke="#111" stroke-width="0.06" textLength="11.72" lengthAdjust="spacingAndGlyphs">-1,72</text><text x="142.14" y="382.71" font-size="5.3" font-family='"Liberation Sans", sans-serif' fill="#111" stroke="#111" stroke-width="0.06" textLength="11.72" lengthAdjust="spacingAndGlyphs">-0,24</text><text x="179.5" y="382.71" font-size="5.3" font-family='"Liberation Sans", sans-serif' fill="#111" stroke="#111" stroke-width="0.06" textLength="10.01" lengthAdjust="spacingAndGlyphs">2,09</text><text x="213.07" y="382.71" font-size="5.3" font-family='"Liberation Sans", sans-serif' fill="#111" stroke="#111" stroke-width="0.06" textLength="12.87" lengthAdjust="spacingAndGlyphs">15,95</text><text x="249" y="382.71" font-size="5.3" font-family='"Liberation Sans", sans-serif' fill="#111" stroke="#111" stroke-width="0.06" textLength="10.01" lengthAdjust="spacingAndGlyphs">4,64</text><text x="279.64" y="382.71" font-size="5.3" font-family='"Liberation Sans", sans-serif' fill="#111" stroke="#111" stroke-width="0.06" textLength="15.72" lengthAdjust="spacingAndGlyphs">941,95</text><text x="315.57" y="382.71" font-size="5.3" font-family='"Liberation Sans", sans-serif' fill="#111" stroke="#111" stroke-width="0.06" textLength="12.87" lengthAdjust="spacingAndGlyphs">58,05</text><text x="40.28" y="389.71" font-size="5.3" font-family='"Liberation Sans", sans-serif' fill="#111" stroke="#111" stroke-width="0.06" textLength="17.43" lengthAdjust="spacingAndGlyphs">Arizona</text><text x="94.07" y="389.71" font-size="5.3" font-family='"Liberation Sans", sans-serif' fill="#111" stroke="#111" stroke-width="0.06" textLength="12.87" lengthAdjust="spacingAndGlyphs">14,25</text><text x="142.14" y="389.71" font-size="5.3" font-family='"Liberation Sans", sans-serif' fill="#111" stroke="#111" stroke-width="0.06" textLength="11.72" lengthAdjust="spacingAndGlyphs">-0,03</text><text x="179.5" y="389.71" font-size="5.3" font-family='"Liberation Sans", sans-serif' fill="#111" stroke="#111" stroke-width="0.06" textLength="10.01" lengthAdjust="spacingAndGlyphs">4,25</text><text x="213.07" y="389.71" font-size="5.3" font-family='"Liberation Sans", sans-serif' fill="#111" stroke="#111" stroke-width="0.06" textLength="12.87" lengthAdjust="spacingAndGlyphs">15,88</text><text x="249" y="389.71" font-size="5.3" font-family='"Liberation Sans", sans-serif' fill="#111" stroke="#111" stroke-width="0.06" textLength="10.01" lengthAdjust="spacingAndGlyphs">7,77</text><text x="279.64" y="389.71" font-size="5.3" font-family='"Liberation Sans", sans-serif' fill="#111" stroke="#111" stroke-width="0.06" textLength="15.72" lengthAdjust="spacingAndGlyphs">869,54</text><text x="314.14" y="389.71" font-size="5.3" font-family='"Liberation Sans", sans-serif' fill="#111" stroke="#111" stroke-width="0.06" textLength="15.72" lengthAdjust="spacingAndGlyphs">130,46</text><text x="38.28" y="396.71" font-size="5.3" font-family='"Liberation Sans", sans-serif' fill="#111" stroke="#111" stroke-width="0.06" textLength="21.43" lengthAdjust="spacingAndGlyphs">Arkansas</text><text x="95.5" y="396.71" font-size="5.3" font-family='"Liberation Sans", sans-serif' fill="#111" stroke="#111" stroke-width="0.06" textLength="10.01" lengthAdjust="spacingAndGlyphs">0,36</text><text x="142.14" y="396.71" font-size="5.3" font-family='"Liberation Sans", sans-serif' fill="#111" stroke="#111" stroke-width="0.06" textLength="11.72" lengthAdjust="spacingAndGlyphs">-0,01</text><text x="179.5" y="396.71" font-size="5.3" font-family='"Liberation Sans", sans-serif' fill="#111" stroke="#111" stroke-width="0.06" textLength="10.01" lengthAdjust="spacingAndGlyphs">1,07</text><text x="213.07" y="396.71" font-size="5.3" font-family='"Liberation Sans", sans-serif' fill="#111" stroke="#111" stroke-width="0.06" textLength="12.87" lengthAdjust="spacingAndGlyphs">14,35</text><text x="247.57" y="396.71" font-size="5.3" font-family='"Liberation Sans", sans-serif' fill="#111" stroke="#111" stroke-width="0.06" textLength="12.87" lengthAdjust="spacingAndGlyphs">10,51</text><text x="279.64" y="396.71" font-size="5.3" font-family='"Liberation Sans", sans-serif' fill="#111" stroke="#111" stroke-width="0.06" textLength="15.72" lengthAdjust="spacingAndGlyphs">861,06</text><text x="314.14" y="396.71" font-size="5.3" font-family='"Liberation Sans", sans-serif' fill="#111" stroke="#111" stroke-width="0.06" textLength="15.72" lengthAdjust="spacingAndGlyphs">138,94</text><text x="38.14" y="403.71" font-size="5.3" font-family='"Liberation Sans", sans-serif' fill="#111" stroke="#111" stroke-width="0.06" textLength="21.72" lengthAdjust="spacingAndGlyphs">California</text><text x="94.64" y="403.71" font-size="5.3" font-family='"Liberation Sans", sans-serif' fill="#111" stroke="#111" stroke-width="0.06" textLength="11.72" lengthAdjust="spacingAndGlyphs">-2,01</text><text x="142.14" y="403.71" font-size="5.3" font-family='"Liberation Sans", sans-serif' fill="#111" stroke="#111" stroke-width="0.06" textLength="11.72" lengthAdjust="spacingAndGlyphs">-0,04</text><text x="179.5" y="403.71" font-size="5.3" font-family='"Liberation Sans", sans-serif' fill="#111" stroke="#111" stroke-width="0.06" textLength="10.01" lengthAdjust="spacingAndGlyphs">7,88</text><text x="213.07" y="403.71" font-size="5.3" font-family='"Liberation Sans", sans-serif' fill="#111" stroke="#111" stroke-width="0.06" textLength="12.87" lengthAdjust="spacingAndGlyphs">15,37</text><text x="249" y="403.71" font-size="5.3" font-family='"Liberation Sans", sans-serif' fill="#111" stroke="#111" stroke-width="0.06" textLength="10.01" lengthAdjust="spacingAndGlyphs">6,72</text><text x="279.64" y="403.71" font-size="5.3" font-family='"Liberation Sans", sans-serif' fill="#111" stroke="#111" stroke-width="0.06" textLength="15.72" lengthAdjust="spacingAndGlyphs">894,03</text><text x="314.14" y="403.71" font-size="5.3" font-family='"Liberation Sans", sans-serif' fill="#111" stroke="#111" stroke-width="0.06" textLength="15.72" lengthAdjust="spacingAndGlyphs">105,97</text><text x="38.57" y="410.71" font-size="5.3" font-family='"Liberation Sans", sans-serif' fill="#111" stroke="#111" stroke-width="0.06" textLength="20.86" lengthAdjust="spacingAndGlyphs">Colorado</text><text x="95.5" y="410.71" font-size="5.3" font-family='"Liberation Sans", sans-serif' fill="#111" stroke="#111" stroke-width="0.06" textLength="10.01" lengthAdjust="spacingAndGlyphs">9,32</text><text x="142.14" y="410.71" font-size="5.3" font-family='"Liberation Sans", sans-serif' fill="#111" stroke="#111" stroke-width="0.06" textLength="11.72" lengthAdjust="spacingAndGlyphs">-0,06</text><text x="179.5" y="410.71" font-size="5.3" font-family='"Liberation Sans", sans-serif' fill="#111" stroke="#111" stroke-width="0.06" textLength="10.01" lengthAdjust="spacingAndGlyphs">3,57</text><text x="213.07" y="410.71" font-size="5.3" font-family='"Liberation Sans", sans-serif' fill="#111" stroke="#111" stroke-width="0.06" textLength="12.87" lengthAdjust="spacingAndGlyphs">14,57</text><text x="249" y="410.71" font-size="5.3" font-family='"Liberation Sans", sans-serif' fill="#111" stroke="#111" stroke-width="0.06" textLength="10.01" lengthAdjust="spacingAndGlyphs">6,26</text><text x="279.64" y="410.71" font-size="5.3" font-family='"Liberation Sans", sans-serif' fill="#111" stroke="#111" stroke-width="0.06" textLength="15.72" lengthAdjust="spacingAndGlyphs">903,52</text><text x="315.57" y="410.71" font-size="5.3" font-family='"Liberation Sans", sans-serif' fill="#111" stroke="#111" stroke-width="0.06" textLength="12.87" lengthAdjust="spacingAndGlyphs">96,48</text><text x="35.43" y="417.71" font-size="5.3" font-family='"Liberation Sans", sans-serif' fill="#111" stroke="#111" stroke-width="0.06" textLength="27.15" lengthAdjust="spacingAndGlyphs">Connecticut</text><text x="94.64" y="417.71" font-size="5.3" font-family='"Liberation Sans", sans-serif' fill="#111" stroke="#111" stroke-width="0.06" textLength="11.72" lengthAdjust="spacingAndGlyphs">-2,37</text><text x="142.14" y="417.71" font-size="5.3" font-family='"Liberation Sans", sans-serif' fill="#111" stroke="#111" stroke-width="0.06" textLength="11.72" lengthAdjust="spacingAndGlyphs">-0,02</text><text x="179.5" y="417.71" font-size="5.3" font-family='"Liberation Sans", sans-serif' fill="#111" stroke="#111" stroke-width="0.06" textLength="10.01" lengthAdjust="spacingAndGlyphs">3,50</text><text x="213.07" y="417.71" font-size="5.3" font-family='"Liberation Sans", sans-serif' fill="#111" stroke="#111" stroke-width="0.06" textLength="12.87" lengthAdjust="spacingAndGlyphs">12,52</text><text x="249" y="417.71" font-size="5.3" font-family='"Liberation Sans", sans-serif' fill="#111" stroke="#111" stroke-width="0.06" textLength="10.01" lengthAdjust="spacingAndGlyphs">9,00</text><text x="279.64" y="417.71" font-size="5.3" font-family='"Liberation Sans", sans-serif' fill="#111" stroke="#111" stroke-width="0.06" textLength="15.72" lengthAdjust="spacingAndGlyphs">862,64</text><text x="314.14" y="417.71" font-size="5.3" font-family='"Liberation Sans", sans-serif' fill="#111" stroke="#111" stroke-width="0.06" textLength="15.72" lengthAdjust="spacingAndGlyphs">137,36</text><text x="38.14" y="424.71" font-size="5.3" font-family='"Liberation Sans", sans-serif' fill="#111" stroke="#111" stroke-width="0.06" textLength="21.72" lengthAdjust="spacingAndGlyphs">Delaware</text><text x="95.5" y="424.71" font-size="5.3" font-family='"Liberation Sans", sans-serif' fill="#111" stroke="#111" stroke-width="0.06" textLength="10.01" lengthAdjust="spacingAndGlyphs">5,39</text><text x="142.14" y="424.71" font-size="5.3" font-family='"Liberation Sans", sans-serif' fill="#111" stroke="#111" stroke-width="0.06" textLength="11.72" lengthAdjust="spacingAndGlyphs">-0,04</text><text x="179.5" y="424.71" font-size="5.3" font-family='"Liberation Sans", sans-serif' fill="#111" stroke="#111" stroke-width="0.06" textLength="10.01" lengthAdjust="spacingAndGlyphs">2,12</text><text x="213.07" y="424.71" font-size="5.3" font-family='"Liberation Sans", sans-serif' fill="#111" stroke="#111" stroke-width="0.06" textLength="12.87" lengthAdjust="spacingAndGlyphs">14,01</text><text x="249" y="424.71" font-size="5.3" font-family='"Liberation Sans", sans-serif' fill="#111" stroke="#111" stroke-width="0.06" textLength="10.01" lengthAdjust="spacingAndGlyphs">8,79</text><text x="279.64" y="424.71" font-size="5.3" font-family='"Liberation Sans", sans-serif' fill="#111" stroke="#111" stroke-width="0.06" textLength="15.72" lengthAdjust="spacingAndGlyphs">869,45</text><text x="314.14" y="424.71" font-size="5.3" font-family='"Liberation Sans", sans-serif' fill="#111" stroke="#111" stroke-width="0.06" textLength="15.72" lengthAdjust="spacingAndGlyphs">130,55</text><text x="26.1" y="431.71" font-size="5.3" font-family='"Liberation Sans", sans-serif' fill="#111" stroke="#111" stroke-width="0.08">District of Columbia</text><text x="94.64" y="431.71" font-size="5.3" font-family='"Liberation Sans", sans-serif' fill="#111" stroke="#111" stroke-width="0.06" textLength="11.72" lengthAdjust="spacingAndGlyphs">-7,77</text><text x="142.14" y="431.71" font-size="5.3" font-family='"Liberation Sans", sans-serif' fill="#111" stroke="#111" stroke-width="0.06" textLength="11.72" lengthAdjust="spacingAndGlyphs">-0,07</text><text x="179.5" y="431.71" font-size="5.3" font-family='"Liberation Sans", sans-serif' fill="#111" stroke="#111" stroke-width="0.06" textLength="10.01" lengthAdjust="spacingAndGlyphs">5,73</text><text x="213.07" y="431.71" font-size="5.3" font-family='"Liberation Sans", sans-serif' fill="#111" stroke="#111" stroke-width="0.06" textLength="12.87" lengthAdjust="spacingAndGlyphs">14,33</text><text x="247.57" y="431.71" font-size="5.3" font-family='"Liberation Sans", sans-serif' fill="#111" stroke="#111" stroke-width="0.06" textLength="12.87" lengthAdjust="spacingAndGlyphs">10,76</text><text x="279.64" y="431.71" font-size="5.3" font-family='"Liberation Sans", sans-serif' fill="#111" stroke="#111" stroke-width="0.06" textLength="15.72" lengthAdjust="spacingAndGlyphs">880,75</text><text x="314.33" y="431.71" font-size="5.3" font-family='"Liberation Sans", sans-serif' fill="#111" stroke="#111" stroke-width="0.06" textLength="15.34" lengthAdjust="spacingAndGlyphs">119,25</text><text x="41.14" y="438.71" font-size="5.3" font-family='"Liberation Sans", sans-serif' fill="#111" stroke="#111" stroke-width="0.06" textLength="15.71" lengthAdjust="spacingAndGlyphs">Florida</text><text x="94.07" y="438.71" font-size="5.3" font-family='"Liberation Sans", sans-serif' fill="#111" stroke="#111" stroke-width="0.06" textLength="12.87" lengthAdjust="spacingAndGlyphs">13,52</text><text x="142.14" y="438.71" font-size="5.3" font-family='"Liberation Sans", sans-serif' fill="#111" stroke="#111" stroke-width="0.06" textLength="11.72" lengthAdjust="spacingAndGlyphs">-0,03</text><text x="179.5" y="438.71" font-size="5.3" font-family='"Liberation Sans", sans-serif' fill="#111" stroke="#111" stroke-width="0.06" textLength="10.01" lengthAdjust="spacingAndGlyphs">3,76</text><text x="213.07" y="438.71" font-size="5.3" font-family='"Liberation Sans", sans-serif' fill="#111" stroke="#111" stroke-width="0.06" textLength="12.87" lengthAdjust="spacingAndGlyphs">12,54</text><text x="247.57" y="438.71" font-size="5.3" font-family='"Liberation Sans", sans-serif' fill="#111" stroke="#111" stroke-width="0.06" textLength="12.87" lengthAdjust="spacingAndGlyphs">10,13</text><text x="279.64" y="438.71" font-size="5.3" font-family='"Liberation Sans", sans-serif' fill="#111" stroke="#111" stroke-width="0.06" textLength="15.72" lengthAdjust="spacingAndGlyphs">826,28</text><text x="314.14" y="438.71" font-size="5.3" font-family='"Liberation Sans", sans-serif' fill="#111" stroke="#111" stroke-width="0.06" textLength="15.72" lengthAdjust="spacingAndGlyphs">173,72</text><text x="39.85" y="445.71" font-size="5.3" font-family='"Liberation Sans", sans-serif' fill="#111" stroke="#111" stroke-width="0.06" textLength="18.29" lengthAdjust="spacingAndGlyphs">Georgia</text><text x="95.5" y="445.71" font-size="5.3" font-family='"Liberation Sans", sans-serif' fill="#111" stroke="#111" stroke-width="0.06" textLength="10.01" lengthAdjust="spacingAndGlyphs">7,07</text><text x="142.14" y="445.71" font-size="5.3" font-family='"Liberation Sans", sans-serif' fill="#111" stroke="#111" stroke-width="0.06" textLength="11.72" lengthAdjust="spacingAndGlyphs">-0,07</text><text x="179.5" y="445.71" font-size="5.3" font-family='"Liberation Sans", sans-serif' fill="#111" stroke="#111" stroke-width="0.06" textLength="10.01" lengthAdjust="spacingAndGlyphs">2,71</text><text x="213.07" y="445.71" font-size="5.3" font-family='"Liberation Sans", sans-serif' fill="#111" stroke="#111" stroke-width="0.06" textLength="12.87" lengthAdjust="spacingAndGlyphs">16,16</text><text x="249" y="445.71" font-size="5.3" font-family='"Liberation Sans", sans-serif' fill="#111" stroke="#111" stroke-width="0.06" textLength="10.01" lengthAdjust="spacingAndGlyphs">7,75</text><text x="279.64" y="445.71" font-size="5.3" font-family='"Liberation Sans", sans-serif' fill="#111" stroke="#111" stroke-width="0.06" textLength="15.72" lengthAdjust="spacingAndGlyphs">904,37</text><text x="315.57" y="445.71" font-size="5.3" font-family='"Liberation Sans", sans-serif' fill="#111" stroke="#111" stroke-width="0.06" textLength="12.87" lengthAdjust="spacingAndGlyphs">95,63</text><text x="41.29" y="452.71" font-size="5.3" font-family='"Liberation Sans", sans-serif' fill="#111" stroke="#111" stroke-width="0.06" textLength="15.43" lengthAdjust="spacingAndGlyphs">Hawaii</text><text x="94.64" y="452.71" font-size="5.3" font-family='"Liberation Sans", sans-serif' fill="#111" stroke="#111" stroke-width="0.06" textLength="11.72" lengthAdjust="spacingAndGlyphs">-2,50</text><text x="142.14" y="452.71" font-size="5.3" font-family='"Liberation Sans", sans-serif' fill="#111" stroke="#111" stroke-width="0.06" textLength="11.72" lengthAdjust="spacingAndGlyphs">-0,29</text><text x="179.5" y="452.71" font-size="5.3" font-family='"Liberation Sans", sans-serif' fill="#111" stroke="#111" stroke-width="0.06" textLength="10.01" lengthAdjust="spacingAndGlyphs">4,32</text><text x="213.07" y="452.71" font-size="5.3" font-family='"Liberation Sans", sans-serif' fill="#111" stroke="#111" stroke-width="0.06" textLength="12.87" lengthAdjust="spacingAndGlyphs">15,44</text><text x="249" y="452.71" font-size="5.3" font-family='"Liberation Sans", sans-serif' fill="#111" stroke="#111" stroke-width="0.06" textLength="10.01" lengthAdjust="spacingAndGlyphs">6,87</text><text x="279.64" y="452.71" font-size="5.3" font-family='"Liberation Sans", sans-serif' fill="#111" stroke="#111" stroke-width="0.06" textLength="15.72" lengthAdjust="spacingAndGlyphs">866,18</text><text x="314.14" y="452.71" font-size="5.3" font-family='"Liberation Sans", sans-serif' fill="#111" stroke="#111" stroke-width="0.06" textLength="15.72" lengthAdjust="spacingAndGlyphs">133,82</text><text x="42.57" y="459.71" font-size="5.3" font-family='"Liberation Sans", sans-serif' fill="#111" stroke="#111" stroke-width="0.06" textLength="12.87" lengthAdjust="spacingAndGlyphs">Idaho</text><text x="95.5" y="459.71" font-size="5.3" font-family='"Liberation Sans", sans-serif' fill="#111" stroke="#111" stroke-width="0.06" textLength="10.01" lengthAdjust="spacingAndGlyphs">6,40</text><text x="142.14" y="459.71" font-size="5.3" font-family='"Liberation Sans", sans-serif' fill="#111" stroke="#111" stroke-width="0.06" textLength="11.72" lengthAdjust="spacingAndGlyphs">-0,03</text><text x="179.5" y="459.71" font-size="5.3" font-family='"Liberation Sans", sans-serif' fill="#111" stroke="#111" stroke-width="0.06" textLength="10.01" lengthAdjust="spacingAndGlyphs">2,24</text><text x="213.07" y="459.71" font-size="5.3" font-family='"Liberation Sans", sans-serif' fill="#111" stroke="#111" stroke-width="0.06" textLength="12.87" lengthAdjust="spacingAndGlyphs">15,00</text><text x="249" y="459.71" font-size="5.3" font-family='"Liberation Sans", sans-serif' fill="#111" stroke="#111" stroke-width="0.06" textLength="10.01" lengthAdjust="spacingAndGlyphs">7,34</text><text x="279.64" y="459.71" font-size="5.3" font-family='"Liberation Sans", sans-serif' fill="#111" stroke="#111" stroke-width="0.06" textLength="15.72" lengthAdjust="spacingAndGlyphs">887,18</text><text x="314.33" y="459.71" font-size="5.3" font-family='"Liberation Sans", sans-serif' fill="#111" stroke="#111" stroke-width="0.06" textLength="15.34" lengthAdjust="spacingAndGlyphs">112,82</text><text x="41.86" y="466.71" font-size="5.3" font-family='"Liberation Sans", sans-serif' fill="#111" stroke="#111" stroke-width="0.06" textLength="14.29" lengthAdjust="spacingAndGlyphs">Illinois</text><text x="94.64" y="466.71" font-size="5.3" font-family='"Liberation Sans", sans-serif' fill="#111" stroke="#111" stroke-width="0.06" textLength="11.72" lengthAdjust="spacingAndGlyphs">-7,28</text><text x="142.14" y="466.71" font-size="5.3" font-family='"Liberation Sans", sans-serif' fill="#111" stroke="#111" stroke-width="0.06" textLength="11.72" lengthAdjust="spacingAndGlyphs">-0,02</text><text x="179.5" y="466.71" font-size="5.3" font-family='"Liberation Sans", sans-serif' fill="#111" stroke="#111" stroke-width="0.06" textLength="10.01" lengthAdjust="spacingAndGlyphs">4,76</text><text x="213.07" y="466.71" font-size="5.3" font-family='"Liberation Sans", sans-serif' fill="#111" stroke="#111" stroke-width="0.06" textLength="12.87" lengthAdjust="spacingAndGlyphs">14,87</text><text x="249" y="466.71" font-size="5.3" font-family='"Liberation Sans", sans-serif' fill="#111" stroke="#111" stroke-width="0.06" textLength="10.01" lengthAdjust="spacingAndGlyphs">8,72</text><text x="279.64" y="466.71" font-size="5.3" font-family='"Liberation Sans", sans-serif' fill="#111" stroke="#111" stroke-width="0.06" textLength="15.72" lengthAdjust="spacingAndGlyphs">880,26</text><text x="314.33" y="466.71" font-size="5.3" font-family='"Liberation Sans", sans-serif' fill="#111" stroke="#111" stroke-width="0.06" textLength="15.34" lengthAdjust="spacingAndGlyphs">119,74</text><text x="40.57" y="473.71" font-size="5.3" font-family='"Liberation Sans", sans-serif' fill="#111" stroke="#111" stroke-width="0.06" textLength="16.87" lengthAdjust="spacingAndGlyphs">Indiana</text><text x="94.64" y="473.71" font-size="5.3" font-family='"Liberation Sans", sans-serif' fill="#111" stroke="#111" stroke-width="0.06" textLength="11.72" lengthAdjust="spacingAndGlyphs">-1,99</text><text x="143" y="473.71" font-size="5.3" font-family='"Liberation Sans", sans-serif' fill="#111" stroke="#111" stroke-width="0.06" textLength="10.01" lengthAdjust="spacingAndGlyphs">0,00</text><text x="179.5" y="473.71" font-size="5.3" font-family='"Liberation Sans", sans-serif' fill="#111" stroke="#111" stroke-width="0.06" textLength="10.01" lengthAdjust="spacingAndGlyphs">1,23</text><text x="213.07" y="473.71" font-size="5.3" font-family='"Liberation Sans", sans-serif' fill="#111" stroke="#111" stroke-width="0.06" textLength="12.87" lengthAdjust="spacingAndGlyphs">14,08</text><text x="249" y="473.71" font-size="5.3" font-family='"Liberation Sans", sans-serif' fill="#111" stroke="#111" stroke-width="0.06" textLength="10.01" lengthAdjust="spacingAndGlyphs">9,19</text><text x="279.64" y="473.71" font-size="5.3" font-family='"Liberation Sans", sans-serif' fill="#111" stroke="#111" stroke-width="0.06" textLength="15.72" lengthAdjust="spacingAndGlyphs">876,78</text><text x="314.14" y="473.71" font-size="5.3" font-family='"Liberation Sans", sans-serif' fill="#111" stroke="#111" stroke-width="0.06" textLength="15.72" lengthAdjust="spacingAndGlyphs">123,22</text><text x="43.57" y="480.71" font-size="5.3" font-family='"Liberation Sans", sans-serif' fill="#111" stroke="#111" stroke-width="0.06" textLength="10.86" lengthAdjust="spacingAndGlyphs">Iowa</text><text x="94.64" y="480.71" font-size="5.3" font-family='"Liberation Sans", sans-serif' fill="#111" stroke="#111" stroke-width="0.06" textLength="11.72" lengthAdjust="spacingAndGlyphs">-5,68</text><text x="143" y="480.71" font-size="5.3" font-family='"Liberation Sans", sans-serif' fill="#111" stroke="#111" stroke-width="0.06" textLength="10.01" lengthAdjust="spacingAndGlyphs">0,00</text><text x="179.5" y="480.71" font-size="5.3" font-family='"Liberation Sans", sans-serif' fill="#111" stroke="#111" stroke-width="0.06" textLength="10.01" lengthAdjust="spacingAndGlyphs">1,21</text><text x="213.07" y="480.71" font-size="5.3" font-family='"Liberation Sans", sans-serif' fill="#111" stroke="#111" stroke-width="0.06" textLength="12.87" lengthAdjust="spacingAndGlyphs">12,83</text><text x="249" y="480.71" font-size="5.3" font-family='"Liberation Sans", sans-serif' fill="#111" stroke="#111" stroke-width="0.06" textLength="10.01" lengthAdjust="spacingAndGlyphs">9,70</text><text x="279.64" y="480.71" font-size="5.3" font-family='"Liberation Sans", sans-serif' fill="#111" stroke="#111" stroke-width="0.06" textLength="15.72" lengthAdjust="spacingAndGlyphs">851,89</text><text x="314.33" y="480.71" font-size="5.3" font-family='"Liberation Sans", sans-serif' fill="#111" stroke="#111" stroke-width="0.06" textLength="15.34" lengthAdjust="spacingAndGlyphs">148,11</text><text x="40.43" y="487.71" font-size="5.3" font-family='"Liberation Sans", sans-serif' fill="#111" stroke="#111" stroke-width="0.06" textLength="17.15" lengthAdjust="spacingAndGlyphs">Kansas</text><text x="94.64" y="487.71" font-size="5.3" font-family='"Liberation Sans", sans-serif' fill="#111" stroke="#111" stroke-width="0.06" textLength="11.72" lengthAdjust="spacingAndGlyphs">-6,36</text><text x="142.14" y="487.71" font-size="5.3" font-family='"Liberation Sans", sans-serif' fill="#111" stroke="#111" stroke-width="0.06" textLength="11.72" lengthAdjust="spacingAndGlyphs">-0,05</text><text x="179.5" y="487.71" font-size="5.3" font-family='"Liberation Sans", sans-serif' fill="#111" stroke="#111" stroke-width="0.06" textLength="10.01" lengthAdjust="spacingAndGlyphs">2,28</text><text x="213.07" y="487.71" font-size="5.3" font-family='"Liberation Sans", sans-serif' fill="#111" stroke="#111" stroke-width="0.06" textLength="12.87" lengthAdjust="spacingAndGlyphs">14,53</text><text x="249" y="487.71" font-size="5.3" font-family='"Liberation Sans", sans-serif' fill="#111" stroke="#111" stroke-width="0.06" textLength="10.01" lengthAdjust="spacingAndGlyphs">9,35</text><text x="279.64" y="487.71" font-size="5.3" font-family='"Liberation Sans", sans-serif' fill="#111" stroke="#111" stroke-width="0.06" textLength="15.72" lengthAdjust="spacingAndGlyphs">868,32</text><text x="314.14" y="487.71" font-size="5.3" font-family='"Liberation Sans", sans-serif' fill="#111" stroke="#111" stroke-width="0.06" textLength="15.72" lengthAdjust="spacingAndGlyphs">131,68</text><text x="38.43" y="494.71" font-size="5.3" font-family='"Liberation Sans", sans-serif' fill="#111" stroke="#111" stroke-width="0.06" textLength="21.15" lengthAdjust="spacingAndGlyphs">Kentucky</text><text x="95.5" y="494.71" font-size="5.3" font-family='"Liberation Sans", sans-serif' fill="#111" stroke="#111" stroke-width="0.06" textLength="10.01" lengthAdjust="spacingAndGlyphs">0,15</text><text x="142.14" y="494.71" font-size="5.3" font-family='"Liberation Sans", sans-serif' fill="#111" stroke="#111" stroke-width="0.06" textLength="11.72" lengthAdjust="spacingAndGlyphs">-0,06</text><text x="179.5" y="494.71" font-size="5.3" font-family='"Liberation Sans", sans-serif' fill="#111" stroke="#111" stroke-width="0.06" textLength="10.01" lengthAdjust="spacingAndGlyphs">0,75</text><text x="213.07" y="494.71" font-size="5.3" font-family='"Liberation Sans", sans-serif' fill="#111" stroke="#111" stroke-width="0.06" textLength="12.87" lengthAdjust="spacingAndGlyphs">13,63</text><text x="249" y="494.71" font-size="5.3" font-family='"Liberation Sans", sans-serif' fill="#111" stroke="#111" stroke-width="0.06" textLength="10.01" lengthAdjust="spacingAndGlyphs">9,89</text><text x="279.64" y="494.71" font-size="5.3" font-family='"Liberation Sans", sans-serif' fill="#111" stroke="#111" stroke-width="0.06" textLength="15.72" lengthAdjust="spacingAndGlyphs">875,51</text><text x="314.14" y="494.71" font-size="5.3" font-family='"Liberation Sans", sans-serif' fill="#111" stroke="#111" stroke-width="0.06" textLength="15.72" lengthAdjust="spacingAndGlyphs">124,49</text><rect x="773.5" y="346.5" width="94" height="52" fill="#fff"/><path d="M773.5 370.5H867.5 M773.5 377.5H867.5 M773.5 384.5H867.5 M773.5 391.5H867.5 M773.5 398.5H867.5 M773.5 370.5V398.5 M797.5 370.5V398.5 M820.5 370.5V398.5 M844.5 370.5V398.5 M867.5 370.5V398.5" stroke="#3a3a3a" stroke-width="0.75" fill="none"/><path d="M797.5 346.5V370.5 M820.5 346.5V370.5 M844.5 346.5V370.5" stroke="#3a3a3a" stroke-width="1.1" fill="none"/><rect x="773.5" y="346.5" width="94" height="24" fill="none" stroke="#3a3a3a" stroke-width="1.1"/><text x="777.6" y="369.21" font-size="5.3" font-family='"Liberation Sans", sans-serif' fill="#111" stroke="#111" stroke-width="0.16" font-weight="bold" textLength="15.81" lengthAdjust="spacingAndGlyphs">Comp1</text><text x="801.1" y="369.21" font-size="5.3" font-family='"Liberation Sans", sans-serif' fill="#111" stroke="#111" stroke-width="0.16" font-weight="bold" textLength="15.81" lengthAdjust="spacingAndGlyphs">Comp2</text><text x="824.6" y="369.21" font-size="5.3" font-family='"Liberation Sans", sans-serif' fill="#111" stroke="#111" stroke-width="0.16" font-weight="bold" textLength="15.81" lengthAdjust="spacingAndGlyphs">Comp3</text><text x="854.32" y="369.21" font-size="5.3" font-family='"Liberation Sans", sans-serif' fill="#111" stroke="#111" stroke-width="0.16" font-weight="bold" textLength="3.37" lengthAdjust="spacingAndGlyphs">R</text><text x="781.93" y="375.71" font-size="5.3" font-family='"Liberation Sans", sans-serif' fill="#111" stroke="#111" stroke-width="0.06" textLength="7.15" lengthAdjust="spacingAndGlyphs">0,2</text><text x="805.43" y="375.71" font-size="5.3" font-family='"Liberation Sans", sans-serif' fill="#111" stroke="#111" stroke-width="0.06" textLength="7.15" lengthAdjust="spacingAndGlyphs">0,4</text><text x="828.93" y="375.71" font-size="5.3" font-family='"Liberation Sans", sans-serif' fill="#111" stroke="#111" stroke-width="0.06" textLength="7.15" lengthAdjust="spacingAndGlyphs">0,4</text><text x="853.14" y="375.71" font-size="5.3" font-family='"Liberation Sans", sans-serif' fill="#111" stroke="#111" stroke-width="0.06" textLength="5.72" lengthAdjust="spacingAndGlyphs">12</text><text x="781.93" y="382.71" font-size="5.3" font-family='"Liberation Sans", sans-serif' fill="#111" stroke="#111" stroke-width="0.06" textLength="7.15" lengthAdjust="spacingAndGlyphs">0,5</text><text x="804" y="382.71" font-size="5.3" font-family='"Liberation Sans", sans-serif' fill="#111" stroke="#111" stroke-width="0.06" textLength="10.01" lengthAdjust="spacingAndGlyphs">0,25</text><text x="827.5" y="382.71" font-size="5.3" font-family='"Liberation Sans", sans-serif' fill="#111" stroke="#111" stroke-width="0.06" textLength="10.01" lengthAdjust="spacingAndGlyphs">0,25</text><text x="853.14" y="382.71" font-size="5.3" font-family='"Liberation Sans", sans-serif' fill="#111" stroke="#111" stroke-width="0.06" textLength="5.72" lengthAdjust="spacingAndGlyphs">16</text><text x="781.93" y="389.71" font-size="5.3" font-family='"Liberation Sans", sans-serif' fill="#111" stroke="#111" stroke-width="0.06" textLength="7.15" lengthAdjust="spacingAndGlyphs">0,6</text><text x="805.43" y="389.71" font-size="5.3" font-family='"Liberation Sans", sans-serif' fill="#111" stroke="#111" stroke-width="0.06" textLength="7.15" lengthAdjust="spacingAndGlyphs">0,1</text><text x="828.93" y="389.71" font-size="5.3" font-family='"Liberation Sans", sans-serif' fill="#111" stroke="#111" stroke-width="0.06" textLength="7.15" lengthAdjust="spacingAndGlyphs">0,3</text><text x="853.14" y="389.71" font-size="5.3" font-family='"Liberation Sans", sans-serif' fill="#111" stroke="#111" stroke-width="0.06" textLength="5.72" lengthAdjust="spacingAndGlyphs">18</text><text x="781.93" y="396.71" font-size="5.3" font-family='"Liberation Sans", sans-serif' fill="#111" stroke="#111" stroke-width="0.06" textLength="7.15" lengthAdjust="spacingAndGlyphs">0,8</text><text x="807.57" y="396.71" font-size="5.3" font-family='"Liberation Sans", sans-serif' fill="#111" stroke="#111" stroke-width="0.06" textLength="2.86" lengthAdjust="spacingAndGlyphs">0</text><text x="828.93" y="396.71" font-size="5.3" font-family='"Liberation Sans", sans-serif' fill="#111" stroke="#111" stroke-width="0.06" textLength="7.15" lengthAdjust="spacingAndGlyphs">0,2</text><text x="853.33" y="396.71" font-size="5.3" font-family='"Liberation Sans", sans-serif' fill="#111" stroke="#111" stroke-width="0.06" textLength="5.34" lengthAdjust="spacingAndGlyphs">11</text><rect x="57.5" y="104.5" width="207" height="195" fill="#fff" stroke="#ababab" stroke-width="1"/><text x="115.7" y="113.22" font-size="5.6" font-family='"Liberation Sans", sans-serif' fill="#111" stroke="#111" stroke-width="0.14" font-weight="bold" textLength="89.3" lengthAdjust="spacingAndGlyphs">Variables (axes F1 and F2: 67,72 %)</text><rect x="81.3" y="123.5" width="174" height="152.8" fill="#fff" stroke="#a0a0a0" stroke-width="0.6"/><line x1="81.3" y1="199.6" x2="255.3" y2="199.6" stroke="#888" stroke-width="0.55"/><line x1="168.3" y1="123.5" x2="168.3" y2="276.3" stroke="#888" stroke-width="0.55"/><path d="M81.3 198.6V200.6 M167.3 276H169.3 M103.05 198.6V200.6 M167.3 256.9H169.3 M124.8 198.6V200.6 M167.3 237.8H169.3 M146.55 198.6V200.6 M167.3 218.7H169.3 M168.3 198.6V200.6 M167.3 199.6H169.3 M190.05 198.6V200.6 M167.3 180.5H169.3 M211.8 198.6V200.6 M167.3 161.4H169.3 M233.55 198.6V200.6 M167.3 142.3H169.3 M255.3 198.6V200.6 M167.3 123.2H169.3" stroke="#8a8a8a" stroke-width="0.5"/><text x="81.3" y="283.96" font-size="4.6" font-family='"Liberation Sans", sans-serif' fill="#2a2a2a" stroke="#2a2a2a" stroke-width="0.15" text-anchor="middle">-1</text><text x="77.2" y="277.66" font-size="4.6" font-family='"Liberation Sans", sans-serif' fill="#2a2a2a" stroke="#2a2a2a" stroke-width="0.15" text-anchor="end">-1</text><text x="103.05" y="283.96" font-size="4.6" font-family='"Liberation Sans", sans-serif' fill="#2a2a2a" stroke="#2a2a2a" stroke-width="0.15" text-anchor="middle">-0,75</text><text x="77.2" y="258.56" font-size="4.6" font-family='"Liberation Sans", sans-serif' fill="#2a2a2a" stroke="#2a2a2a" stroke-width="0.15" text-anchor="end">-0,75</text><text x="124.8" y="283.96" font-size="4.6" font-family='"Liberation Sans", sans-serif' fill="#2a2a2a" stroke="#2a2a2a" stroke-width="0.15" text-anchor="middle">-0,5</text><text x="77.2" y="239.46" font-size="4.6" font-family='"Liberation Sans", sans-serif' fill="#2a2a2a" stroke="#2a2a2a" stroke-width="0.15" text-anchor="end">-0,5</text><text x="146.55" y="283.96" font-size="4.6" font-family='"Liberation Sans", sans-serif' fill="#2a2a2a" stroke="#2a2a2a" stroke-width="0.15" text-anchor="middle">-0,25</text><text x="77.2" y="220.36" font-size="4.6" font-family='"Liberation Sans", sans-serif' fill="#2a2a2a" stroke="#2a2a2a" stroke-width="0.15" text-anchor="end">-0,25</text><text x="168.3" y="283.96" font-size="4.6" font-family='"Liberation Sans", sans-serif' fill="#2a2a2a" stroke="#2a2a2a" stroke-width="0.15" text-anchor="middle">0</text><text x="77.2" y="201.26" font-size="4.6" font-family='"Liberation Sans", sans-serif' fill="#2a2a2a" stroke="#2a2a2a" stroke-width="0.15" text-anchor="end">0</text><text x="190.05" y="283.96" font-size="4.6" font-family='"Liberation Sans", sans-serif' fill="#2a2a2a" stroke="#2a2a2a" stroke-width="0.15" text-anchor="middle">0,25</text><text x="77.2" y="182.16" font-size="4.6" font-family='"Liberation Sans", sans-serif' fill="#2a2a2a" stroke="#2a2a2a" stroke-width="0.15" text-anchor="end">0,25</text><text x="211.8" y="283.96" font-size="4.6" font-family='"Liberation Sans", sans-serif' fill="#2a2a2a" stroke="#2a2a2a" stroke-width="0.15" text-anchor="middle">0,5</text><text x="77.2" y="163.06" font-size="4.6" font-family='"Liberation Sans", sans-serif' fill="#2a2a2a" stroke="#2a2a2a" stroke-width="0.15" text-anchor="end">0,5</text><text x="233.55" y="283.96" font-size="4.6" font-family='"Liberation Sans", sans-serif' fill="#2a2a2a" stroke="#2a2a2a" stroke-width="0.15" text-anchor="middle">0,75</text><text x="77.2" y="143.96" font-size="4.6" font-family='"Liberation Sans", sans-serif' fill="#2a2a2a" stroke="#2a2a2a" stroke-width="0.15" text-anchor="end">0,75</text><text x="255.3" y="283.96" font-size="4.6" font-family='"Liberation Sans", sans-serif' fill="#2a2a2a" stroke="#2a2a2a" stroke-width="0.15" text-anchor="middle">1</text><text x="77.2" y="124.86" font-size="4.6" font-family='"Liberation Sans", sans-serif' fill="#2a2a2a" stroke="#2a2a2a" stroke-width="0.15" text-anchor="end">1</text><text x="155.3" y="290.6" font-size="5" font-family='"Liberation Serif", serif' fill="#222" stroke="#222" stroke-width="0.1" font-weight="bold" textLength="26.3" lengthAdjust="spacingAndGlyphs">F1 (50,96 %)</text><text x="0" y="0" font-size="5" font-family='"Liberation Serif", serif' font-weight="bold" fill="#222" stroke="#222" stroke-width="0.12" text-anchor="middle" transform="translate(65.8 199.6) rotate(-90)">F2 (16,76 %)</text><ellipse cx="168.3" cy="199.6" rx="87" ry="76.4" fill="none" stroke="#1a1a1a" stroke-width="0.8"/><path d="M168.3 199.6L183 134.5 M168.3 199.6L205 156.2 M168.3 199.6L122 183.2 M168.3 199.6L86.7 189.3 M168.3 199.6L91 212 M168.3 199.6L250.3 209.8 M168.3 199.6L234 215.3" stroke="#e02433" stroke-width="0.75" fill="none"/><circle cx="183" cy="134.5" r="0.8" fill="#e02433"/><circle cx="205" cy="156.2" r="0.8" fill="#e02433"/><circle cx="122" cy="183.2" r="0.8" fill="#e02433"/><circle cx="86.7" cy="189.3" r="0.8" fill="#e02433"/><circle cx="91" cy="212" r="0.8" fill="#e02433"/><circle cx="250.3" cy="209.8" r="0.8" fill="#e02433"/><circle cx="234" cy="215.3" r="0.8" fill="#e02433"/><text x="170.8" y="132.13" font-size="4.8" font-family='"Liberation Serif", serif' fill="#333" stroke="#333" stroke-width="0.13" textLength="33.9" lengthAdjust="spacingAndGlyphs">Net Domestic Mig.</text><text x="195.8" y="150.43" font-size="4.8" font-family='"Liberation Serif", serif' fill="#333" stroke="#333" stroke-width="0.13" textLength="32.9" lengthAdjust="spacingAndGlyphs">Net Int. Migration</text><text x="104" y="168.93" font-size="4.8" font-family='"Liberation Serif", serif' fill="#333" stroke="#333" stroke-width="0.13" textLength="51" lengthAdjust="spacingAndGlyphs">Federal/Civilian moves from</text><text x="129.6" y="173.93" font-size="4.8" font-family='"Liberation Serif", serif' fill="#333" stroke="#333" stroke-width="0.13" text-anchor="middle">abroad</text><text x="83.7" y="186.63" font-size="4.8" font-family='"Liberation Serif", serif' fill="#333" stroke="#333" stroke-width="0.13" textLength="24.1" lengthAdjust="spacingAndGlyphs">&gt; 65 Pop. Est.</text><text x="83.2" y="218.73" font-size="4.8" font-family='"Liberation Serif", serif' fill="#333" stroke="#333" stroke-width="0.13" textLength="26.2" lengthAdjust="spacingAndGlyphs">Period Deaths</text><text x="230" y="197.13" font-size="4.8" font-family='"Liberation Serif", serif' fill="#333" stroke="#333" stroke-width="0.13" textLength="25" lengthAdjust="spacingAndGlyphs">&lt; 65 Pop. Est.</text><text x="219" y="223.83" font-size="4.8" font-family='"Liberation Serif", serif' fill="#333" stroke="#333" stroke-width="0.13" textLength="24" lengthAdjust="spacingAndGlyphs">Period Births</text><rect x="715.5" y="104.5" width="223" height="197" fill="#fff" stroke="#ababab" stroke-width="1"/><text x="806.3" y="113.49" font-size="5.8" font-family='"Liberation Sans", sans-serif' fill="#111" stroke="#111" stroke-width="0.14" font-weight="bold" textLength="41.2" lengthAdjust="spacingAndGlyphs">Ternary diagram</text><path d="M810.04 161.68H845.96 M774.12 271.6L756.16 244.12 M774.12 271.6L845.96 161.68 M792.08 189.16H863.92 M810.04 271.6L774.12 216.64 M810.04 271.6L863.92 189.16 M774.12 216.64H881.88 M845.96 271.6L792.08 189.16 M845.96 271.6L881.88 216.64 M756.16 244.12H899.84 M881.88 271.6L810.04 161.68 M881.88 271.6L899.84 244.12" stroke="#bdbdbd" stroke-width="0.5" fill="none"/><path d="M828 134.2L738.2 271.6L917.8 271.6z" fill="none" stroke="#222" stroke-width="0.8"/><path d="M810.04 216.64L774.12 271.6 M810.04 216.64L792.08 189.16 M850.45 237.25L828 271.6 M850.45 237.25L805.55 168.55 M854.94 257.86L845.96 271.6 M854.94 257.86L801.06 175.42 M881.88 271.6L881.88 271.6 M881.88 271.6L810.04 161.68" stroke="#e02433" stroke-width="0.6" fill="none"/><path d="M810.04 216.64H881.88 M850.45 237.25H895.35 M854.94 257.86H908.82" stroke="#e02433" stroke-width="0.6" fill="none" stroke-dasharray="1.2 0.8"/><circle cx="810.04" cy="216.64" r="0.9" fill="#e02433"/><text x="814.64" y="218.16" font-size="3.4" font-family='"Liberation Sans", sans-serif' fill="#888" stroke="#888" stroke-width="0.14" text-anchor="middle">12</text><circle cx="850.45" cy="237.25" r="0.9" fill="#e02433"/><text x="855.05" y="238.77" font-size="3.4" font-family='"Liberation Sans", sans-serif' fill="#888" stroke="#888" stroke-width="0.14" text-anchor="middle">16</text><circle cx="854.94" cy="257.86" r="0.9" fill="#e02433"/><text x="859.54" y="259.38" font-size="3.4" font-family='"Liberation Sans", sans-serif' fill="#888" stroke="#888" stroke-width="0.14" text-anchor="middle">18</text><circle cx="881.88" cy="271.6" r="0.9" fill="#e02433"/><text x="886.48" y="273.12" font-size="3.4" font-family='"Liberation Sans", sans-serif' fill="#888" stroke="#888" stroke-width="0.14" text-anchor="middle">11</text><circle cx="828" cy="134.2" r="0.8" fill="#222"/><circle cx="738.2" cy="271.6" r="0.8" fill="#222"/><circle cx="917.8" cy="271.6" r="0.8" fill="#222"/><text x="823.2" y="135.11" font-size="4.2" font-family='"Liberation Sans", sans-serif' fill="#222" stroke="#222" stroke-width="0.2" text-anchor="middle">0</text><text x="832.8" y="135.11" font-size="4.2" font-family='"Liberation Sans", sans-serif' fill="#222" stroke="#222" stroke-width="0.2" text-anchor="middle">1</text><text x="804.44" y="163.19" font-size="4.2" font-family='"Liberation Sans", sans-serif' fill="#222" stroke="#222" stroke-width="0.2" text-anchor="middle">0,2</text><text x="851.56" y="163.19" font-size="4.2" font-family='"Liberation Sans", sans-serif' fill="#222" stroke="#222" stroke-width="0.2" text-anchor="middle">0,8</text><text x="786.48" y="190.67" font-size="4.2" font-family='"Liberation Sans", sans-serif' fill="#222" stroke="#222" stroke-width="0.2" text-anchor="middle">0,4</text><text x="869.52" y="190.67" font-size="4.2" font-family='"Liberation Sans", sans-serif' fill="#222" stroke="#222" stroke-width="0.2" text-anchor="middle">0,6</text><text x="768.52" y="218.15" font-size="4.2" font-family='"Liberation Sans", sans-serif' fill="#222" stroke="#222" stroke-width="0.2" text-anchor="middle">0,6</text><text x="887.48" y="218.15" font-size="4.2" font-family='"Liberation Sans", sans-serif' fill="#222" stroke="#222" stroke-width="0.2" text-anchor="middle">0,4</text><text x="750.56" y="245.63" font-size="4.2" font-family='"Liberation Sans", sans-serif' fill="#222" stroke="#222" stroke-width="0.2" text-anchor="middle">0,8</text><text x="905.44" y="245.63" font-size="4.2" font-family='"Liberation Sans", sans-serif' fill="#222" stroke="#222" stroke-width="0.2" text-anchor="middle">0,2</text><text x="733.2" y="273.11" font-size="4.2" font-family='"Liberation Sans", sans-serif' fill="#222" stroke="#222" stroke-width="0.2" text-anchor="middle">1</text><text x="922.8" y="273.11" font-size="4.2" font-family='"Liberation Sans", sans-serif' fill="#222" stroke="#222" stroke-width="0.2" text-anchor="middle">0</text><text x="738.2" y="279.31" font-size="4.2" font-family='"Liberation Sans", sans-serif' fill="#222" stroke="#222" stroke-width="0.14" text-anchor="middle">0</text><text x="774.12" y="279.31" font-size="4.2" font-family='"Liberation Sans", sans-serif' fill="#222" stroke="#222" stroke-width="0.14" text-anchor="middle">0,2</text><text x="810.04" y="279.31" font-size="4.2" font-family='"Liberation Sans", sans-serif' fill="#222" stroke="#222" stroke-width="0.14" text-anchor="middle">0,4</text><text x="845.96" y="279.31" font-size="4.2" font-family='"Liberation Sans", sans-serif' fill="#222" stroke="#222" stroke-width="0.14" text-anchor="middle">0,6</text><text x="881.88" y="279.31" font-size="4.2" font-family='"Liberation Sans", sans-serif' fill="#222" stroke="#222" stroke-width="0.14" text-anchor="middle">0,8</text><text x="917.8" y="279.31" font-size="4.2" font-family='"Liberation Sans", sans-serif' fill="#222" stroke="#222" stroke-width="0.14" text-anchor="middle">1</text><text x="824" y="290.46" font-size="4.6" font-family='"Liberation Sans", sans-serif' fill="#222" stroke="#222" stroke-width="0.14" text-anchor="middle" font-weight="bold">Comp1</text><text x="0" y="0" font-size="4.6" font-family='"Liberation Sans", sans-serif' font-weight="bold" fill="#222" stroke="#222" stroke-width="0.15" text-anchor="middle" transform="translate(765.4 193.4) rotate(-57)">Comp2</text><text x="0" y="0" font-size="4.6" font-family='"Liberation Sans", sans-serif' font-weight="bold" fill="#222" stroke="#222" stroke-width="0.15" text-anchor="middle" transform="translate(891.8 193.4) rotate(57)">Comp3</text><rect x="356.5" y="347.5" width="353" height="195" fill="#fff" stroke="#6f6f6f" stroke-width="1"/><text x="482" y="357.12" font-size="5.6" font-family='"Liberation Sans", sans-serif' fill="#111" stroke="#111" stroke-width="0.14" font-weight="bold" textLength="112.2" lengthAdjust="spacingAndGlyphs">International airline passengers (thousands)</text><path d="M371.6 520V362.5H704.5V520" fill="none" stroke="#a8a8a8" stroke-width="0.6"/><path d="M371.6 519.7V520.9 M373.91 519.7V520.9 M376.22 519.7V520.9 M378.54 519.7V520.9 M380.85 519.7V520.9 M383.16 519.7V520.9 M385.47 519.7V520.9 M387.78 519.7V520.9 M390.09 519.7V520.9 M392.41 519.7V520.9 M394.72 519.7V520.9 M397.03 519.7V520.9 M399.34 519.7V520.9 M401.65 519.7V520.9 M403.97 519.7V520.9 M406.28 519.7V520.9 M408.59 519.7V520.9 M410.9 519.7V520.9 M413.21 519.7V520.9 M415.52 519.7V520.9 M417.84 519.7V520.9 M420.15 519.7V520.9 M422.46 519.7V520.9 M424.77 519.7V520.9 M427.08 519.7V520.9 M429.4 519.7V520.9 M431.71 519.7V520.9 M434.02 519.7V520.9 M436.33 519.7V520.9 M438.64 519.7V520.9 M440.95 519.7V520.9 M443.27 519.7V520.9 M445.58 519.7V520.9 M447.89 519.7V520.9 M450.2 519.7V520.9 M452.51 519.7V520.9 M454.83 519.7V520.9 M457.14 519.7V520.9 M459.45 519.7V520.9 M461.76 519.7V520.9 M464.07 519.7V520.9 M466.38 519.7V520.9 M468.7 519.7V520.9 M471.01 519.7V520.9 M473.32 519.7V520.9 M475.63 519.7V520.9 M477.94 519.7V520.9 M480.25 519.7V520.9 M482.57 519.7V520.9 M484.88 519.7V520.9 M487.19 519.7V520.9 M489.5 519.7V520.9 M491.81 519.7V520.9 M494.13 519.7V520.9 M496.44 519.7V520.9 M498.75 519.7V520.9 M501.06 519.7V520.9 M503.37 519.7V520.9 M505.68 519.7V520.9 M508 519.7V520.9 M510.31 519.7V520.9 M512.62 519.7V520.9 M514.93 519.7V520.9 M517.24 519.7V520.9 M519.56 519.7V520.9 M521.87 519.7V520.9 M524.18 519.7V520.9 M526.49 519.7V520.9 M528.8 519.7V520.9 M531.11 519.7V520.9 M533.43 519.7V520.9 M535.74 519.7V520.9 M538.05 519.7V520.9 M540.36 519.7V520.9 M542.67 519.7V520.9 M544.99 519.7V520.9 M547.3 519.7V520.9 M549.61 519.7V520.9 M551.92 519.7V520.9 M554.23 519.7V520.9 M556.54 519.7V520.9 M558.86 519.7V520.9 M561.17 519.7V520.9 M563.48 519.7V520.9 M565.79 519.7V520.9 M568.1 519.7V520.9 M570.42 519.7V520.9 M572.73 519.7V520.9 M575.04 519.7V520.9 M577.35 519.7V520.9 M579.66 519.7V520.9 M581.97 519.7V520.9 M584.29 519.7V520.9 M586.6 519.7V520.9 M588.91 519.7V520.9 M591.22 519.7V520.9 M593.53 519.7V520.9 M595.85 519.7V520.9 M598.16 519.7V520.9 M600.47 519.7V520.9 M602.78 519.7V520.9 M605.09 519.7V520.9 M607.4 519.7V520.9 M609.72 519.7V520.9 M612.03 519.7V520.9 M614.34 519.7V520.9 M616.65 519.7V520.9 M618.96 519.7V520.9 M621.27 519.7V520.9 M623.59 519.7V520.9 M625.9 519.7V520.9 M628.21 519.7V520.9 M630.52 519.7V520.9 M632.83 519.7V520.9 M635.15 519.7V520.9 M637.46 519.7V520.9 M639.77 519.7V520.9 M642.08 519.7V520.9 M644.39 519.7V520.9 M646.7 519.7V520.9 M649.02 519.7V520.9 M651.33 519.7V520.9 M653.64 519.7V520.9 M655.95 519.7V520.9 M658.26 519.7V520.9 M660.58 519.7V520.9 M662.89 519.7V520.9 M665.2 519.7V520.9 M667.51 519.7V520.9 M669.82 519.7V520.9 M672.13 519.7V520.9 M674.45 519.7V520.9 M676.76 519.7V520.9 M679.07 519.7V520.9 M681.38 519.7V520.9 M683.69 519.7V520.9 M686.01 519.7V520.9 M688.32 519.7V520.9 M690.63 519.7V520.9 M692.94 519.7V520.9 M695.25 519.7V520.9 M697.56 519.7V520.9 M699.88 519.7V520.9 M702.19 519.7V520.9 M704.5 519.7V520.9" stroke="#b0b0b0" stroke-width="0.55"/><text x="367.4" y="521.58" font-size="4.4" font-family='"Liberation Sans", sans-serif' fill="#444" stroke="#444" stroke-width="0.08" text-anchor="end">0</text><text x="367.4" y="499.08" font-size="4.4" font-family='"Liberation Sans", sans-serif' fill="#444" stroke="#444" stroke-width="0.08" text-anchor="end">100</text><text x="367.4" y="476.58" font-size="4.4" font-family='"Liberation Sans", sans-serif' fill="#444" stroke="#444" stroke-width="0.08" text-anchor="end">200</text><text x="367.4" y="454.08" font-size="4.4" font-family='"Liberation Sans", sans-serif' fill="#444" stroke="#444" stroke-width="0.08" text-anchor="end">300</text><text x="367.4" y="431.58" font-size="4.4" font-family='"Liberation Sans", sans-serif' fill="#444" stroke="#444" stroke-width="0.08" text-anchor="end">400</text><text x="367.4" y="409.08" font-size="4.4" font-family='"Liberation Sans", sans-serif' fill="#444" stroke="#444" stroke-width="0.08" text-anchor="end">500</text><text x="367.4" y="386.58" font-size="4.4" font-family='"Liberation Sans", sans-serif' fill="#444" stroke="#444" stroke-width="0.08" text-anchor="end">600</text><text x="367.4" y="364.08" font-size="4.4" font-family='"Liberation Sans", sans-serif' fill="#444" stroke="#444" stroke-width="0.08" text-anchor="end">700</text><polyline points="372.76,494.8 375.07,493.45 377.38,490.3 379.69,490.98 382,492.77 384.31,489.62 386.63,486.7 388.94,486.7 391.25,489.4 393.56,493.23 395.87,496.6 398.19,493.45 400.5,494.12 402.81,491.65 405.12,488.27 407.43,489.62 409.74,491.88 412.06,486.48 414.37,481.75 416.68,481.75 418.99,484.45 421.3,490.07 423.62,494.35 425.93,488.5 428.24,487.38 430.55,486.25 432.86,479.95 435.17,483.32 437.49,481.3 439.8,479.95 442.11,475.23 444.42,475.23 446.73,478.6 449.05,483.55 451.36,487.15 453.67,482.65 455.98,481.52 458.29,479.5 460.6,476.57 462.92,479.27 465.23,478.82 467.54,470.95 469.85,468.25 472.16,465.55 474.48,472.98 476.79,477.02 479.1,481.3 481.41,476.35 483.72,475.9 486.03,475.9 488.35,466.9 490.66,467.12 492.97,468.48 495.28,465.32 497.59,460.6 499.91,458.8 502.22,466.68 504.53,472.52 506.84,479.5 509.15,474.77 511.46,474.1 513.78,477.7 516.09,467.12 518.4,468.93 520.71,467.35 523.02,460.6 525.34,452.05 527.65,454.07 529.96,461.73 532.27,468.48 534.58,474.32 536.89,468.48 539.21,465.55 541.52,467.57 543.83,459.93 546.14,459.48 548.45,459.25 550.76,449.12 553.08,438.1 555.39,441.93 557.7,449.8 560.01,458.35 562.32,466.68 564.64,457.45 566.95,456.1 569.26,457.68 571.57,448.68 573.88,449.57 576.19,448.45 578.51,435.85 580.82,427.07 583.13,428.88 585.44,440.12 587.75,451.15 590.07,459.02 592.38,451.15 594.69,449.12 597,452.27 599.31,439.9 601.62,441.7 603.94,440.12 606.25,425.05 608.56,415.38 610.87,414.93 613.18,429.1 615.5,441.93 617.81,451.38 620.12,444.4 622.43,443.5 624.74,448.45 627.05,438.55 629.37,441.7 631.68,438.32 633.99,422.12 636.3,409.52 638.61,406.38 640.93,429.1 643.24,439.23 645.55,450.25 647.86,444.18 650.17,439 652.48,443.05 654.8,428.65 657.11,430.9 659.42,425.5 661.73,413.8 664.04,396.7 666.36,394.23 668.67,415.82 670.98,428.43 673.29,438.55 675.6,428.88 677.91,426.18 680.23,432.02 682.54,425.73 684.85,416.27 687.16,413.8 689.47,399.62 691.79,380.05 694.1,383.65 696.41,405.7 698.72,416.27 701.03,432.25 703.34,422.8" fill="none" stroke="#e02433" stroke-width="1.1" stroke-linejoin="round"/><text x="0" y="0" font-size="4.4" font-family='"Liberation Sans", sans-serif' fill="#4a4a4a" stroke="#4a4a4a" stroke-width="0.05" text-anchor="end" transform="translate(374.31 523.4) rotate(-90)">janv-49</text><text x="0" y="0" font-size="4.4" font-family='"Liberation Sans", sans-serif' fill="#4a4a4a" stroke="#4a4a4a" stroke-width="0.05" text-anchor="end" transform="translate(381.24 523.4) rotate(-90)">avr-49</text><text x="0" y="0" font-size="4.4" font-family='"Liberation Sans", sans-serif' fill="#4a4a4a" stroke="#4a4a4a" stroke-width="0.05" text-anchor="end" transform="translate(388.18 523.4) rotate(-90)">juil-49</text><text x="0" y="0" font-size="4.4" font-family='"Liberation Sans", sans-serif' fill="#4a4a4a" stroke="#4a4a4a" stroke-width="0.05" text-anchor="end" transform="translate(395.11 523.4) rotate(-90)">oct-49</text><text x="0" y="0" font-size="4.4" font-family='"Liberation Sans", sans-serif' fill="#4a4a4a" stroke="#4a4a4a" stroke-width="0.05" text-anchor="end" transform="translate(402.05 523.4) rotate(-90)">janv-50</text><text x="0" y="0" font-size="4.4" font-family='"Liberation Sans", sans-serif' fill="#4a4a4a" stroke="#4a4a4a" stroke-width="0.05" text-anchor="end" transform="translate(408.98 523.4) rotate(-90)">avr-50</text><text x="0" y="0" font-size="4.4" font-family='"Liberation Sans", sans-serif' fill="#4a4a4a" stroke="#4a4a4a" stroke-width="0.05" text-anchor="end" transform="translate(415.92 523.4) rotate(-90)">juil-50</text><text x="0" y="0" font-size="4.4" font-family='"Liberation Sans", sans-serif' fill="#4a4a4a" stroke="#4a4a4a" stroke-width="0.05" text-anchor="end" transform="translate(422.85 523.4) rotate(-90)">oct-50</text><text x="0" y="0" font-size="4.4" font-family='"Liberation Sans", sans-serif' fill="#4a4a4a" stroke="#4a4a4a" stroke-width="0.05" text-anchor="end" transform="translate(429.79 523.4) rotate(-90)">janv-51</text><text x="0" y="0" font-size="4.4" font-family='"Liberation Sans", sans-serif' fill="#4a4a4a" stroke="#4a4a4a" stroke-width="0.05" text-anchor="end" transform="translate(436.72 523.4) rotate(-90)">avr-51</text><text x="0" y="0" font-size="4.4" font-family='"Liberation Sans", sans-serif' fill="#4a4a4a" stroke="#4a4a4a" stroke-width="0.05" text-anchor="end" transform="translate(443.66 523.4) rotate(-90)">juil-51</text><text x="0" y="0" font-size="4.4" font-family='"Liberation Sans", sans-serif' fill="#4a4a4a" stroke="#4a4a4a" stroke-width="0.05" text-anchor="end" transform="translate(450.6 523.4) rotate(-90)">oct-51</text><text x="0" y="0" font-size="4.4" font-family='"Liberation Sans", sans-serif' fill="#4a4a4a" stroke="#4a4a4a" stroke-width="0.05" text-anchor="end" transform="translate(457.53 523.4) rotate(-90)">janv-52</text><text x="0" y="0" font-size="4.4" font-family='"Liberation Sans", sans-serif' fill="#4a4a4a" stroke="#4a4a4a" stroke-width="0.05" text-anchor="end" transform="translate(464.47 523.4) rotate(-90)">avr-52</text><text x="0" y="0" font-size="4.4" font-family='"Liberation Sans", sans-serif' fill="#4a4a4a" stroke="#4a4a4a" stroke-width="0.05" text-anchor="end" transform="translate(471.4 523.4) rotate(-90)">juil-52</text><text x="0" y="0" font-size="4.4" font-family='"Liberation Sans", sans-serif' fill="#4a4a4a" stroke="#4a4a4a" stroke-width="0.05" text-anchor="end" transform="translate(478.34 523.4) rotate(-90)">oct-52</text><text x="0" y="0" font-size="4.4" font-family='"Liberation Sans", sans-serif' fill="#4a4a4a" stroke="#4a4a4a" stroke-width="0.05" text-anchor="end" transform="translate(485.27 523.4) rotate(-90)">janv-53</text><text x="0" y="0" font-size="4.4" font-family='"Liberation Sans", sans-serif' fill="#4a4a4a" stroke="#4a4a4a" stroke-width="0.05" text-anchor="end" transform="translate(492.21 523.4) rotate(-90)">avr-53</text><text x="0" y="0" font-size="4.4" font-family='"Liberation Sans", sans-serif' fill="#4a4a4a" stroke="#4a4a4a" stroke-width="0.05" text-anchor="end" transform="translate(499.14 523.4) rotate(-90)">juil-53</text><text x="0" y="0" font-size="4.4" font-family='"Liberation Sans", sans-serif' fill="#4a4a4a" stroke="#4a4a4a" stroke-width="0.05" text-anchor="end" transform="translate(506.08 523.4) rotate(-90)">oct-53</text><text x="0" y="0" font-size="4.4" font-family='"Liberation Sans", sans-serif' fill="#4a4a4a" stroke="#4a4a4a" stroke-width="0.05" text-anchor="end" transform="translate(513.01 523.4) rotate(-90)">janv-54</text><text x="0" y="0" font-size="4.4" font-family='"Liberation Sans", sans-serif' fill="#4a4a4a" stroke="#4a4a4a" stroke-width="0.05" text-anchor="end" transform="translate(519.95 523.4) rotate(-90)">avr-54</text><text x="0" y="0" font-size="4.4" font-family='"Liberation Sans", sans-serif' fill="#4a4a4a" stroke="#4a4a4a" stroke-width="0.05" text-anchor="end" transform="translate(526.89 523.4) rotate(-90)">juil-54</text><text x="0" y="0" font-size="4.4" font-family='"Liberation Sans", sans-serif' fill="#4a4a4a" stroke="#4a4a4a" stroke-width="0.05" text-anchor="end" transform="translate(533.82 523.4) rotate(-90)">oct-54</text><text x="0" y="0" font-size="4.4" font-family='"Liberation Sans", sans-serif' fill="#4a4a4a" stroke="#4a4a4a" stroke-width="0.05" text-anchor="end" transform="translate(540.76 523.4) rotate(-90)">janv-55</text><text x="0" y="0" font-size="4.4" font-family='"Liberation Sans", sans-serif' fill="#4a4a4a" stroke="#4a4a4a" stroke-width="0.05" text-anchor="end" transform="translate(547.69 523.4) rotate(-90)">avr-55</text><text x="0" y="0" font-size="4.4" font-family='"Liberation Sans", sans-serif' fill="#4a4a4a" stroke="#4a4a4a" stroke-width="0.05" text-anchor="end" transform="translate(554.63 523.4) rotate(-90)">juil-55</text><text x="0" y="0" font-size="4.4" font-family='"Liberation Sans", sans-serif' fill="#4a4a4a" stroke="#4a4a4a" stroke-width="0.05" text-anchor="end" transform="translate(561.56 523.4) rotate(-90)">oct-55</text><text x="0" y="0" font-size="4.4" font-family='"Liberation Sans", sans-serif' fill="#4a4a4a" stroke="#4a4a4a" stroke-width="0.05" text-anchor="end" transform="translate(568.5 523.4) rotate(-90)">janv-56</text><text x="0" y="0" font-size="4.4" font-family='"Liberation Sans", sans-serif' fill="#4a4a4a" stroke="#4a4a4a" stroke-width="0.05" text-anchor="end" transform="translate(575.43 523.4) rotate(-90)">avr-56</text><text x="0" y="0" font-size="4.4" font-family='"Liberation Sans", sans-serif' fill="#4a4a4a" stroke="#4a4a4a" stroke-width="0.05" text-anchor="end" transform="translate(582.37 523.4) rotate(-90)">juil-56</text><text x="0" y="0" font-size="4.4" font-family='"Liberation Sans", sans-serif' fill="#4a4a4a" stroke="#4a4a4a" stroke-width="0.05" text-anchor="end" transform="translate(589.3 523.4) rotate(-90)">oct-56</text><text x="0" y="0" font-size="4.4" font-family='"Liberation Sans", sans-serif' fill="#4a4a4a" stroke="#4a4a4a" stroke-width="0.05" text-anchor="end" transform="translate(596.24 523.4) rotate(-90)">janv-57</text><text x="0" y="0" font-size="4.4" font-family='"Liberation Sans", sans-serif' fill="#4a4a4a" stroke="#4a4a4a" stroke-width="0.05" text-anchor="end" transform="translate(603.17 523.4) rotate(-90)">avr-57</text><text x="0" y="0" font-size="4.4" font-family='"Liberation Sans", sans-serif' fill="#4a4a4a" stroke="#4a4a4a" stroke-width="0.05" text-anchor="end" transform="translate(610.11 523.4) rotate(-90)">juil-57</text><text x="0" y="0" font-size="4.4" font-family='"Liberation Sans", sans-serif' fill="#4a4a4a" stroke="#4a4a4a" stroke-width="0.05" text-anchor="end" transform="translate(617.05 523.4) rotate(-90)">oct-57</text><text x="0" y="0" font-size="4.4" font-family='"Liberation Sans", sans-serif' fill="#4a4a4a" stroke="#4a4a4a" stroke-width="0.05" text-anchor="end" transform="translate(623.98 523.4) rotate(-90)">janv-58</text><text x="0" y="0" font-size="4.4" font-family='"Liberation Sans", sans-serif' fill="#4a4a4a" stroke="#4a4a4a" stroke-width="0.05" text-anchor="end" transform="translate(630.92 523.4) rotate(-90)">avr-58</text><text x="0" y="0" font-size="4.4" font-family='"Liberation Sans", sans-serif' fill="#4a4a4a" stroke="#4a4a4a" stroke-width="0.05" text-anchor="end" transform="translate(637.85 523.4) rotate(-90)">juil-58</text><text x="0" y="0" font-size="4.4" font-family='"Liberation Sans", sans-serif' fill="#4a4a4a" stroke="#4a4a4a" stroke-width="0.05" text-anchor="end" transform="translate(644.79 523.4) rotate(-90)">oct-58</text><text x="0" y="0" font-size="4.4" font-family='"Liberation Sans", sans-serif' fill="#4a4a4a" stroke="#4a4a4a" stroke-width="0.05" text-anchor="end" transform="translate(651.72 523.4) rotate(-90)">janv-59</text><text x="0" y="0" font-size="4.4" font-family='"Liberation Sans", sans-serif' fill="#4a4a4a" stroke="#4a4a4a" stroke-width="0.05" text-anchor="end" transform="translate(658.66 523.4) rotate(-90)">avr-59</text><text x="0" y="0" font-size="4.4" font-family='"Liberation Sans", sans-serif' fill="#4a4a4a" stroke="#4a4a4a" stroke-width="0.05" text-anchor="end" transform="translate(665.59 523.4) rotate(-90)">juil-59</text><text x="0" y="0" font-size="4.4" font-family='"Liberation Sans", sans-serif' fill="#4a4a4a" stroke="#4a4a4a" stroke-width="0.05" text-anchor="end" transform="translate(672.53 523.4) rotate(-90)">oct-59</text><text x="0" y="0" font-size="4.4" font-family='"Liberation Sans", sans-serif' fill="#4a4a4a" stroke="#4a4a4a" stroke-width="0.05" text-anchor="end" transform="translate(679.46 523.4) rotate(-90)">janv-60</text><text x="0" y="0" font-size="4.4" font-family='"Liberation Sans", sans-serif' fill="#4a4a4a" stroke="#4a4a4a" stroke-width="0.05" text-anchor="end" transform="translate(686.4 523.4) rotate(-90)">avr-60</text><text x="0" y="0" font-size="4.4" font-family='"Liberation Sans", sans-serif' fill="#4a4a4a" stroke="#4a4a4a" stroke-width="0.05" text-anchor="end" transform="translate(693.34 523.4) rotate(-90)">juil-60</text><text x="0" y="0" font-size="4.4" font-family='"Liberation Sans", sans-serif' fill="#4a4a4a" stroke="#4a4a4a" stroke-width="0.05" text-anchor="end" transform="translate(700.27 523.4) rotate(-90)">oct-60</text><defs><linearGradient id="tb" x1="0" y1="0" x2="0" y2="1"><stop offset="0" stop-color="#e6e6e6"/><stop offset="1" stop-color="#f0f0f0"/></linearGradient><linearGradient id="sb" x1="0" y1="0" x2="0" y2="1"><stop offset="0" stop-color="#e4e4e4"/><stop offset="1" stop-color="#d9d9d9"/></linearGradient></defs><rect x="0" y="574.5" width="960" height="13.5" fill="#f0f0f0"/><rect x="0" y="574.5" width="960" height="2.3" fill="url(#tb)"/><path d="M11 578.2 L7.8 580.9 L11 583.6z" fill="#c8c8c8"/><path d="M19.2 578.2 L22.4 580.9 L19.2 583.6z" fill="#c8c8c8"/><rect x="30.6" y="574.5" width="45.9" height="11.8" fill="#fff"/><path d="M30.6 574.5 V586.3 H76.5 V574.5" fill="none" stroke="#d6d6d6" stroke-width="0.5"/><text x="39" y="583" font-size="6.4" font-family='"Liberation Sans", sans-serif' fill="#2e8b57" stroke="#2e8b57" stroke-width="0.14" font-weight="bold" textLength="29" lengthAdjust="spacingAndGlyphs">PREMIUM</text><path d="M83.6 581.1 h5.4 M86.3 578.4 v5.4" stroke="#444" stroke-width="1.0"/><line x1="95.6" y1="576" x2="95.6" y2="586" stroke="#d8d8d8" stroke-width="0.5"/><rect x="0" y="588" width="960" height="12" fill="url(#sb)"/><line x1="0" y1="588.5" x2="960" y2="588.5" stroke="#c9c9c9" stroke-width="1"/><text x="11.9" y="597.03" font-size="6.2" font-family='"Liberation Sans", sans-serif' fill="#808080" stroke="#808080" stroke-width="0.05" textLength="11.8" lengthAdjust="spacingAndGlyphs">Prêt</text><rect x="798.8" y="588.3" width="18.3" height="11.7" fill="#c6c6c6"/><rect x="805.2" y="591.4" width="1.6" height="1.5" fill="#fff"/><rect x="805.2" y="593.7" width="1.6" height="1.5" fill="#fff"/><rect x="805.2" y="596" width="1.6" height="1.5" fill="#fff"/><rect x="807.6" y="591.4" width="1.6" height="1.5" fill="#fff"/><rect x="807.6" y="593.7" width="1.6" height="1.5" fill="#fff"/><rect x="807.6" y="596" width="1.6" height="1.5" fill="#fff"/><rect x="810" y="591.4" width="1.6" height="1.5" fill="#fff"/><rect x="810" y="593.7" width="1.6" height="1.5" fill="#fff"/><rect x="810" y="596" width="1.6" height="1.5" fill="#fff"/><rect x="812.4" y="591.4" width="1.6" height="1.5" fill="#fff"/><rect x="812.4" y="593.7" width="1.6" height="1.5" fill="#fff"/><rect x="812.4" y="596" width="1.6" height="1.5" fill="#fff"/><rect x="823" y="591.4" width="6.4" height="6.2" fill="none" stroke="#888" stroke-width="0.6"/><line x1="825.1" y1="591.4" x2="825.1" y2="597.6" stroke="#888" stroke-width="0.5"/><line x1="827.3" y1="591.4" x2="827.3" y2="597.6" stroke="#888" stroke-width="0.5"/><rect x="840.6" y="591.4" width="6.6" height="6.2" fill="none" stroke="#888" stroke-width="0.6"/><rect x="842.6" y="591.4" width="2.6" height="2.4" fill="#888"/><line x1="857.4" y1="594.6" x2="860.4" y2="594.6" stroke="#666" stroke-width="1"/><line x1="865.4" y1="594.6" x2="914.1" y2="594.6" stroke="#9c9c9c" stroke-width="1.3"/><circle cx="886.6" cy="594.6" r="2.4" fill="#fff" stroke="#bdbdbd" stroke-width="0.4"/><path d="M918 594.6 h3.8 M919.9 592.7 v3.8" stroke="#666" stroke-width="1.0"/><text x="932" y="597.03" font-size="6.2" font-family='"Liberation Sans", sans-serif' fill="#6a6a6a" stroke="#6a6a6a" stroke-width="0.1">89 %</text></svg></body></html>
